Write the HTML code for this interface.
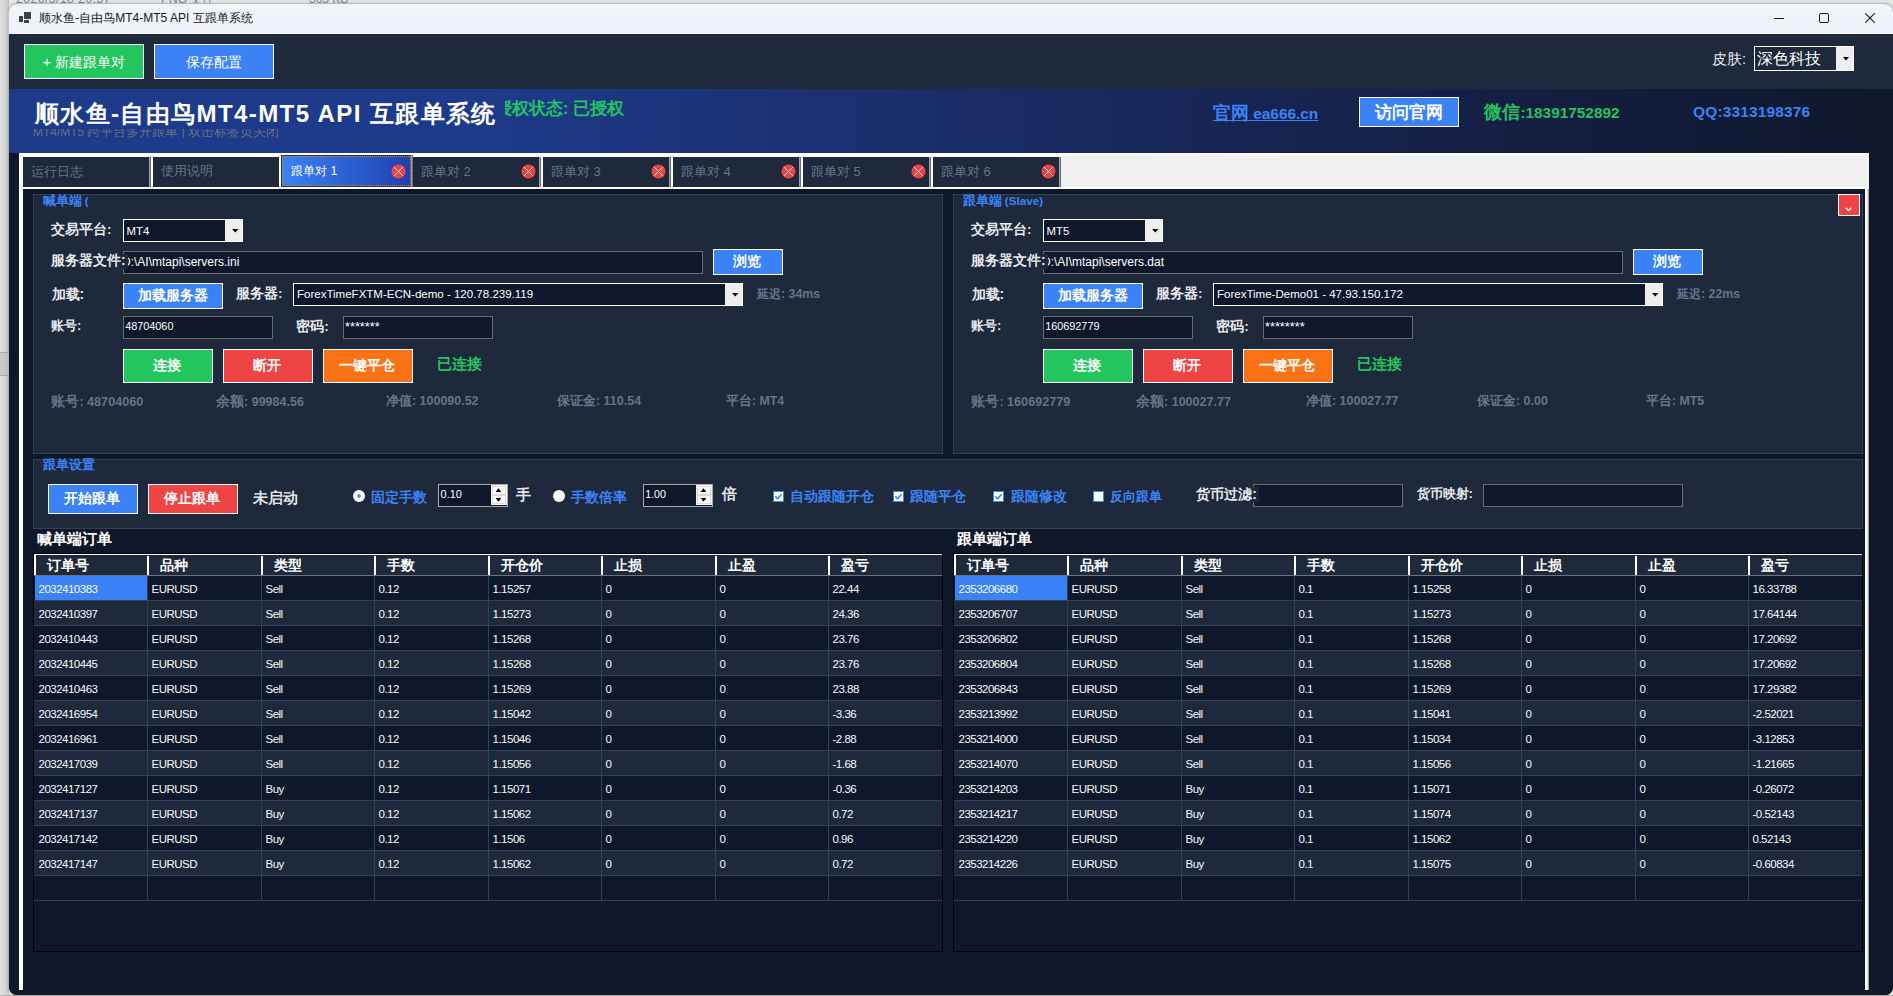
<!DOCTYPE html><html><head><meta charset="utf-8"><style>
html,body{margin:0;padding:0;}
body{width:1893px;height:996px;position:relative;overflow:hidden;background:#efefef;font-family:"Liberation Sans", sans-serif;}
div{box-sizing:border-box;}

</style></head><body>
<div style="position:absolute;left:0px;top:0px;width:1893px;height:996px;background:#e8e8e8;"></div>
<div style="position:absolute;left:0px;top:0px;width:9px;height:996px;background:linear-gradient(90deg,#dfdfdf 0px,#d6d6d6 5px,#cbcbcb 8px,#b8b8b8 9px);"></div>
<div style="position:absolute;left:0px;top:995px;width:1893px;height:1px;background:#b4b4b4;"></div>
<div style="position:absolute;left:0px;top:352px;width:9px;height:24px;background:#c9c9c9;border-top:1px solid #a8a8a8;border-bottom:1px solid #a8a8a8;"></div>
<div id="top1" class="t" style="position:absolute;left:16.00px;top:-9.00px;white-space:nowrap;font-size:12.00px;line-height:16px;color:#7a869a;letter-spacing:0.55px;">2026/3/18 20:37</div>
<div id="top2" class="t" style="position:absolute;left:161.00px;top:-9.00px;white-space:nowrap;font-size:12.00px;line-height:16px;color:#7a869a;">PNG 文件</div>
<div id="top3" class="t" style="position:absolute;left:309.00px;top:-9.00px;white-space:nowrap;font-size:12.00px;line-height:16px;color:#7a869a;">365 KB</div>
<div style="position:absolute;left:9px;top:4px;width:1884px;height:991px;background:#0f172a;border-radius:8px;overflow:hidden;box-shadow:0 0 5px rgba(0,0,0,0.22);"></div>
<div style="position:absolute;left:9px;top:4px;width:1884px;height:30px;background:linear-gradient(180deg,#f0f4fb,#eef2f8);border-radius:8px 8px 0 0;box-shadow:0 -1px 0 #bababa, -1px 0 0 #c4c4c4;"></div>
<div style="position:absolute;left:9px;top:33px;width:1884px;height:1px;background:#f8fafd;"></div>
<div style="position:absolute;left:19px;top:16px;width:4px;height:6px;background:#404040;"></div>
<div style="position:absolute;left:24px;top:12px;width:7px;height:7px;background:#404040;"></div>
<div style="position:absolute;left:24px;top:20px;width:5px;height:3px;background:#404040;"></div>
<div id="wtitle" class="t" style="position:absolute;left:39.20px;top:10.00px;white-space:nowrap;font-size:12.03px;line-height:16px;color:#1a1a1a;">顺水鱼-自由鸟MT4-MT5 API 互跟单系统</div>
<div style="position:absolute;left:1774px;top:18px;width:10px;height:1px;background:#1a1a1a"></div>
<div style="position:absolute;left:1819px;top:13px;width:10px;height:10px;border:1px solid #1a1a1a;border-radius:2px;box-sizing:border-box"></div>
<svg style="position:absolute;left:1865px;top:13px" width="10" height="10"><path d="M0.3 0.3L9.7 9.7M9.7 0.3L0.3 9.7" stroke="#1a1a1a" stroke-width="1.1"/></svg>
<div style="position:absolute;left:9px;top:34px;width:1884px;height:55px;background:#1e293b;"></div>
<div style="position:absolute;left:24px;top:44px;width:120px;height:35px;background:#22c55e;border:1px solid #fff;"></div>
<div id="b_new" class="t" style="position:absolute;left:42.80px;top:53.20px;white-space:nowrap;font-size:14.08px;line-height:18px;color:#fff;">+ 新建跟单对</div>
<div style="position:absolute;left:154px;top:44px;width:120px;height:35px;background:#3b82f6;border:1px solid #fff;"></div>
<div id="b_save" class="t" style="position:absolute;left:185.60px;top:53.80px;white-space:nowrap;font-size:13.70px;line-height:18px;color:#fff;">保存配置</div>
<div id="skinl" class="t" style="position:absolute;left:1712.00px;top:50.00px;white-space:nowrap;font-size:14.58px;line-height:19px;color:#e5e7eb;">皮肤:</div>
<div style="position:absolute;left:1754px;top:46px;width:100px;height:25px;border:1px solid #fff;background:#eee;"></div>
<div style="position:absolute;left:1755px;top:47px;width:81px;height:23px;background:#1e293b;"></div>
<div id="skin" class="t" style="position:absolute;left:1757.00px;top:48.00px;white-space:nowrap;font-size:16.00px;line-height:21px;color:#fff;">深色科技</div>
<svg style="position:absolute;left:1842.5px;top:57px" width="7" height="4"><path d="M0 0H6L3 3.5Z" fill="#000"/></svg>
<div style="position:absolute;left:9px;top:89px;width:1884px;height:64px;background:linear-gradient(90deg,#1e3a8a 0%,#1e3a8a 25%,#172554 65%,#0f172a 100%);"></div>
<div style="position:absolute;left:0;top:129px;width:300px;height:9px;overflow:hidden;">
<div id="sub" class="t" style="position:absolute;left:33.00px;top:-6.00px;white-space:nowrap;font-size:13.00px;line-height:17px;color:#6b7280;"><span style="font-size:92.0%">MT4/MT5 </span>跨平台多开跟单<span style="font-size:92.0%"> | </span>双击标签页关闭</div>
</div>
<div id="btitle" class="t" style="position:absolute;left:35.00px;top:98.20px;white-space:nowrap;font-size:24.08px;line-height:31px;color:#fff;font-weight:bold;letter-spacing:1.36px;">顺水鱼-自由鸟MT4-MT5 API 互跟单系统</div>
<div style="position:absolute;left:505px;top:90px;width:130px;height:30px;overflow:hidden;">
<div id="auth" class="t" style="position:absolute;left:-10.20px;top:7.60px;white-space:nowrap;font-size:17.10px;line-height:22px;color:#22c55e;font-weight:bold;">授权状态: 已授权</div>
</div>
<div id="link" class="t" style="position:absolute;left:1213.00px;top:101.50px;white-space:nowrap;font-size:18.00px;line-height:23px;color:#3b82f6;font-weight:bold;text-decoration:underline;">官网<span style="font-size:85.5%"> ea666.cn</span></div>
<div style="position:absolute;left:1359px;top:97px;width:100px;height:30px;background:#3b82f6;border:1px solid #fff;"></div>
<div id="b_visit" class="t" style="position:absolute;left:1375.20px;top:102.20px;white-space:nowrap;font-size:16.70px;line-height:22px;color:#fff;font-weight:bold;">访问官网</div>
<div id="wechat" class="t" style="position:absolute;left:1484.40px;top:101.00px;white-space:nowrap;font-size:18.00px;line-height:23px;color:#22c55e;font-weight:bold;">微信<span style="font-size:85.5%">:18391752892</span></div>
<div id="qq" class="t" style="position:absolute;left:1693.10px;top:102.00px;white-space:nowrap;font-size:15.40px;line-height:20px;color:#3b82f6;font-weight:bold;letter-spacing:0.2px;">QQ:3313198376</div>
<div style="position:absolute;left:9px;top:153px;width:1884px;height:842px;background:#0f172a;border-radius:0 0 8px 8px;"></div>
<div style="position:absolute;left:19px;top:153px;width:1850px;height:36px;background:#f0f0f0;"></div>
<div style="position:absolute;left:19px;top:153px;width:1042px;height:36px;background:#fbfbfb;"></div>
<div style="position:absolute;left:19px;top:153px;width:1850px;height:2px;background:#fff;"></div>
<div style="position:absolute;left:19px;top:189px;width:4px;height:801px;background:#fff;"></div>
<div style="position:absolute;left:1865px;top:189px;width:4px;height:801px;background:linear-gradient(90deg,#fff 0,#fff 2px,#8a8a8a 4px);"></div>
<div style="position:absolute;left:23px;top:187px;width:1842px;height:2px;background:#fff;"></div>
<div style="position:absolute;left:23px;top:157px;width:126px;height:30px;background:#1e293b;"></div>
<div style="position:absolute;left:149px;top:157px;width:1px;height:30px;background:#a0a0a0;"></div>
<div style="position:absolute;left:150px;top:157px;width:1px;height:30px;background:#6e6e6e;"></div>
<div id="tab0" class="t" style="position:absolute;left:31.00px;top:163.00px;white-space:nowrap;font-size:13.00px;line-height:17px;color:#64748b;">运行日志</div>
<div style="position:absolute;left:153px;top:157px;width:126px;height:30px;background:#1e293b;"></div>
<div id="tab1" class="t" style="position:absolute;left:161.00px;top:162.40px;white-space:nowrap;font-size:13.39px;line-height:17px;color:#64748b;">使用说明</div>
<div style="position:absolute;left:281px;top:155px;width:131px;height:32px;background:linear-gradient(90deg,#3b82f6,#1e40af);border:1px solid #27324a;"></div>
<div style="position:absolute;left:282px;top:156px;width:129px;height:30px;border:1px dotted #d98a0b;"></div>
<div style="position:absolute;left:411px;top:155px;width:1px;height:32px;background:#a0a0a0;"></div>
<div style="position:absolute;left:412px;top:155px;width:1px;height:32px;background:#6e6e6e;"></div>
<div id="tab2" class="t" style="position:absolute;left:291.00px;top:162.50px;white-space:nowrap;font-size:12.35px;line-height:16px;color:#fff;">跟单对 1</div>
<svg style="position:absolute;left:391.1px;top:164px" width="15" height="15"><circle cx="7.5" cy="7.5" r="7" fill="#ef4444"/><path d="M3.3 3.3L11.7 11.7M11.7 3.3L3.3 11.7" stroke="#fff" stroke-width="0.9"/></svg>
<div style="position:absolute;left:413px;top:157px;width:126px;height:30px;background:#1e293b;"></div>
<div style="position:absolute;left:539px;top:157px;width:1px;height:30px;background:#a0a0a0;"></div>
<div style="position:absolute;left:540px;top:157px;width:1px;height:30px;background:#6e6e6e;"></div>
<div id="tab3" class="t" style="position:absolute;left:421.00px;top:163.00px;white-space:nowrap;font-size:13.00px;line-height:17px;color:#64748b;">跟单对 2</div>
<svg style="position:absolute;left:521.2px;top:164px" width="15" height="15"><circle cx="7.5" cy="7.5" r="7" fill="#ef4444"/><path d="M3.3 3.3L11.7 11.7M11.7 3.3L3.3 11.7" stroke="#fff" stroke-width="0.9"/></svg>
<div style="position:absolute;left:543px;top:157px;width:126px;height:30px;background:#1e293b;"></div>
<div style="position:absolute;left:669px;top:157px;width:1px;height:30px;background:#a0a0a0;"></div>
<div style="position:absolute;left:670px;top:157px;width:1px;height:30px;background:#6e6e6e;"></div>
<div id="tab4" class="t" style="position:absolute;left:551.00px;top:163.00px;white-space:nowrap;font-size:13.00px;line-height:17px;color:#64748b;">跟单对 3</div>
<svg style="position:absolute;left:651.2px;top:164px" width="15" height="15"><circle cx="7.5" cy="7.5" r="7" fill="#ef4444"/><path d="M3.3 3.3L11.7 11.7M11.7 3.3L3.3 11.7" stroke="#fff" stroke-width="0.9"/></svg>
<div style="position:absolute;left:673px;top:157px;width:126px;height:30px;background:#1e293b;"></div>
<div style="position:absolute;left:799px;top:157px;width:1px;height:30px;background:#a0a0a0;"></div>
<div style="position:absolute;left:800px;top:157px;width:1px;height:30px;background:#6e6e6e;"></div>
<div id="tab5" class="t" style="position:absolute;left:681.00px;top:163.00px;white-space:nowrap;font-size:13.00px;line-height:17px;color:#64748b;">跟单对 4</div>
<svg style="position:absolute;left:781.2px;top:164px" width="15" height="15"><circle cx="7.5" cy="7.5" r="7" fill="#ef4444"/><path d="M3.3 3.3L11.7 11.7M11.7 3.3L3.3 11.7" stroke="#fff" stroke-width="0.9"/></svg>
<div style="position:absolute;left:803px;top:157px;width:126px;height:30px;background:#1e293b;"></div>
<div style="position:absolute;left:929px;top:157px;width:1px;height:30px;background:#a0a0a0;"></div>
<div style="position:absolute;left:930px;top:157px;width:1px;height:30px;background:#6e6e6e;"></div>
<div id="tab6" class="t" style="position:absolute;left:811.00px;top:163.00px;white-space:nowrap;font-size:13.00px;line-height:17px;color:#64748b;">跟单对 5</div>
<svg style="position:absolute;left:911.2px;top:164px" width="15" height="15"><circle cx="7.5" cy="7.5" r="7" fill="#ef4444"/><path d="M3.3 3.3L11.7 11.7M11.7 3.3L3.3 11.7" stroke="#fff" stroke-width="0.9"/></svg>
<div style="position:absolute;left:933px;top:157px;width:126px;height:30px;background:#1e293b;"></div>
<div style="position:absolute;left:1059px;top:157px;width:1px;height:30px;background:#a0a0a0;"></div>
<div style="position:absolute;left:1060px;top:157px;width:1px;height:30px;background:#6e6e6e;"></div>
<div id="tab7" class="t" style="position:absolute;left:941.00px;top:163.00px;white-space:nowrap;font-size:13.00px;line-height:17px;color:#64748b;">跟单对 6</div>
<svg style="position:absolute;left:1041.2px;top:164px" width="15" height="15"><circle cx="7.5" cy="7.5" r="7" fill="#ef4444"/><path d="M3.3 3.3L11.7 11.7M11.7 3.3L3.3 11.7" stroke="#fff" stroke-width="0.9"/></svg>
<div style="position:absolute;left:33px;top:194px;width:910px;height:260px;background:#1e293b;border:1px solid #334155;"></div>
<div id="mgt" class="t" style="position:absolute;left:42.60px;top:192.60px;white-space:nowrap;font-size:12.69px;line-height:16px;color:#3b82f6;font-weight:bold;">喊单端<span style="font-size:92.0%"> (</span></div>
<div id="ml1" class="t" style="position:absolute;left:51.00px;top:221.00px;white-space:nowrap;font-size:13.63px;line-height:18px;color:#e5e7eb;font-weight:bold;">交易平台:</div>
<div style="position:absolute;left:123px;top:219px;width:120px;height:23px;border:1px solid #fff;background:#eee;"></div>
<div style="position:absolute;left:124px;top:220px;width:101px;height:21px;background:#0f172a;"></div>
<svg style="position:absolute;left:231.5px;top:229px" width="7" height="4"><path d="M0 0H6.5L3.25 3.5Z" fill="#000"/></svg>
<div id="mplat" class="t" style="position:absolute;left:126.60px;top:223.60px;white-space:nowrap;font-size:11.38px;line-height:15px;color:#fff;">MT4</div>
<div style="position:absolute;left:123px;top:251px;width:580px;height:23px;border:1px solid #6b6b6b;background:#0f172a;"></div>
<div style="position:absolute;left:124px;top:252px;width:570px;height:20px;overflow:hidden">
<div id="mfile" class="t" style="position:absolute;left:-2.00px;top:2.00px;white-space:nowrap;font-size:12.00px;line-height:16px;color:#fff;">D:\AI\mtapi\servers.ini</div>
</div>
<div style="position:absolute;left:51px;top:254px;width:77px;height:15px;background:#1e293b;"></div>
<div id="ml2" class="t" style="position:absolute;left:51.00px;top:252.40px;white-space:nowrap;font-size:13.80px;line-height:18px;color:#e5e7eb;font-weight:bold;">服务器文件:</div>
<div style="position:absolute;left:713px;top:249px;width:70px;height:26px;background:#3b82f6;border:1px solid #fff;"></div>
<div id="mbrowse" class="t" style="position:absolute;left:733.20px;top:252.20px;white-space:nowrap;font-size:13.94px;line-height:18px;color:#fff;font-weight:bold;">浏览</div>
<div id="ml3" class="t" style="position:absolute;left:51.60px;top:284.50px;white-space:nowrap;font-size:13.83px;line-height:18px;color:#e5e7eb;font-weight:bold;">加载:</div>
<div style="position:absolute;left:123px;top:283px;width:100px;height:26px;background:#3b82f6;border:1px solid #fff;"></div>
<div id="mload" class="t" style="position:absolute;left:138.20px;top:286.00px;white-space:nowrap;font-size:14.35px;line-height:19px;color:#fff;font-weight:bold;">加载服务器</div>
<div id="ml4" class="t" style="position:absolute;left:236.00px;top:285.00px;white-space:nowrap;font-size:13.52px;line-height:18px;color:#e5e7eb;font-weight:bold;">服务器:</div>
<div style="position:absolute;left:293px;top:283px;width:450px;height:23px;border:1px solid #fff;background:#eee;"></div>
<div style="position:absolute;left:294px;top:284px;width:431px;height:21px;background:#0f172a;"></div>
<svg style="position:absolute;left:731.5px;top:293px" width="7" height="4"><path d="M0 0H6.5L3.25 3.5Z" fill="#000"/></svg>
<div id="mserver" class="t" style="position:absolute;left:297.00px;top:286.80px;white-space:nowrap;font-size:11.53px;line-height:15px;color:#fff;">ForexTimeFXTM-ECN-demo - 120.78.239.119</div>
<div id="mdelay" class="t" style="position:absolute;left:757.00px;top:286.30px;white-space:nowrap;font-size:12.36px;line-height:16px;color:#64748b;font-weight:bold;">延迟: 34ms</div>
<div id="ml5" class="t" style="position:absolute;left:51.00px;top:316.90px;white-space:nowrap;font-size:13.09px;line-height:17px;color:#e5e7eb;font-weight:bold;">账号:</div>
<div style="position:absolute;left:123px;top:316px;width:150px;height:23px;border:1px solid #6b6b6b;background:#0f172a;"></div>
<div id="macct" class="t" style="position:absolute;left:125.20px;top:318.80px;white-space:nowrap;font-size:10.85px;line-height:14px;color:#fff;">48704060</div>
<div id="ml6" class="t" style="position:absolute;left:296.20px;top:318.30px;white-space:nowrap;font-size:13.56px;line-height:18px;color:#e5e7eb;font-weight:bold;">密码:</div>
<div style="position:absolute;left:343px;top:316px;width:150px;height:23px;border:1px solid #6b6b6b;background:#0f172a;"></div>
<div id="mpwd" class="t" style="position:absolute;left:345.00px;top:317.50px;white-space:nowrap;font-size:12.73px;line-height:17px;color:#fff;">*******</div>
<div style="position:absolute;left:123px;top:349px;width:90px;height:34px;background:#22c55e;border:1px solid #fff;"></div>
<div id="mc1" class="t" style="position:absolute;left:153.30px;top:356.80px;white-space:nowrap;font-size:13.50px;line-height:18px;color:#fff;font-weight:bold;">连接</div>
<div style="position:absolute;left:223px;top:349px;width:90px;height:34px;background:#ef4444;border:1px solid #fff;"></div>
<div id="mc2" class="t" style="position:absolute;left:253.20px;top:357.30px;white-space:nowrap;font-size:13.50px;line-height:18px;color:#fff;font-weight:bold;">断开</div>
<div style="position:absolute;left:323px;top:349px;width:90px;height:34px;background:#f97316;border:1px solid #fff;"></div>
<div id="mc3" class="t" style="position:absolute;left:339.10px;top:357.30px;white-space:nowrap;font-size:13.50px;line-height:18px;color:#fff;font-weight:bold;">一键平仓</div>
<div id="mconn" class="t" style="position:absolute;left:437.00px;top:354.00px;white-space:nowrap;font-size:15.31px;line-height:20px;color:#22c55e;font-weight:bold;">已连接</div>
<div id="minfo0" class="t" style="position:absolute;left:51.40px;top:392.50px;white-space:nowrap;font-size:13.56px;line-height:18px;color:#64748b;font-weight:bold;">账号<span style="font-size:93.0%">: 48704060</span></div>
<div id="minfo1" class="t" style="position:absolute;left:216.00px;top:392.70px;white-space:nowrap;font-size:13.51px;line-height:18px;color:#64748b;font-weight:bold;">余额<span style="font-size:93.0%">: 99984.56</span></div>
<div id="minfo2" class="t" style="position:absolute;left:386.00px;top:392.20px;white-space:nowrap;font-size:13.42px;line-height:17px;color:#64748b;font-weight:bold;">净值<span style="font-size:93.0%">: 100090.52</span></div>
<div id="minfo3" class="t" style="position:absolute;left:557.00px;top:392.20px;white-space:nowrap;font-size:13.41px;line-height:17px;color:#64748b;font-weight:bold;">保证金<span style="font-size:93.0%">: 110.54</span></div>
<div id="minfo4" class="t" style="position:absolute;left:726.00px;top:392.20px;white-space:nowrap;font-size:13.28px;line-height:17px;color:#64748b;font-weight:bold;">平台<span style="font-size:93.0%">: MT4</span></div>
<div style="position:absolute;left:953px;top:194px;width:910px;height:260px;background:#1e293b;border:1px solid #334155;"></div>
<div id="sgt" class="t" style="position:absolute;left:962.60px;top:192.60px;white-space:nowrap;font-size:12.69px;line-height:16px;color:#3b82f6;font-weight:bold;">跟单端<span style="font-size:92.0%"> (Slave)</span></div>
<div id="sl1" class="t" style="position:absolute;left:971.00px;top:221.00px;white-space:nowrap;font-size:13.63px;line-height:18px;color:#e5e7eb;font-weight:bold;">交易平台:</div>
<div style="position:absolute;left:1043px;top:219px;width:120px;height:23px;border:1px solid #fff;background:#eee;"></div>
<div style="position:absolute;left:1044px;top:220px;width:101px;height:21px;background:#0f172a;"></div>
<svg style="position:absolute;left:1151.5px;top:229px" width="7" height="4"><path d="M0 0H6.5L3.25 3.5Z" fill="#000"/></svg>
<div id="splat" class="t" style="position:absolute;left:1046.60px;top:223.60px;white-space:nowrap;font-size:11.38px;line-height:15px;color:#fff;">MT5</div>
<div style="position:absolute;left:1043px;top:251px;width:580px;height:23px;border:1px solid #6b6b6b;background:#0f172a;"></div>
<div style="position:absolute;left:1044px;top:252px;width:570px;height:20px;overflow:hidden">
<div id="sfile" class="t" style="position:absolute;left:-2.00px;top:2.00px;white-space:nowrap;font-size:12.00px;line-height:16px;color:#fff;">D:\AI\mtapi\servers.dat</div>
</div>
<div style="position:absolute;left:971px;top:254px;width:77px;height:15px;background:#1e293b;"></div>
<div id="sl2" class="t" style="position:absolute;left:971.00px;top:252.40px;white-space:nowrap;font-size:13.80px;line-height:18px;color:#e5e7eb;font-weight:bold;">服务器文件:</div>
<div style="position:absolute;left:1633px;top:249px;width:70px;height:26px;background:#3b82f6;border:1px solid #fff;"></div>
<div id="sbrowse" class="t" style="position:absolute;left:1653.20px;top:252.20px;white-space:nowrap;font-size:13.94px;line-height:18px;color:#fff;font-weight:bold;">浏览</div>
<div id="sl3" class="t" style="position:absolute;left:971.60px;top:284.50px;white-space:nowrap;font-size:13.83px;line-height:18px;color:#e5e7eb;font-weight:bold;">加载:</div>
<div style="position:absolute;left:1043px;top:283px;width:100px;height:26px;background:#3b82f6;border:1px solid #fff;"></div>
<div id="sload" class="t" style="position:absolute;left:1058.20px;top:286.00px;white-space:nowrap;font-size:14.35px;line-height:19px;color:#fff;font-weight:bold;">加载服务器</div>
<div id="sl4" class="t" style="position:absolute;left:1156.00px;top:285.00px;white-space:nowrap;font-size:13.52px;line-height:18px;color:#e5e7eb;font-weight:bold;">服务器:</div>
<div style="position:absolute;left:1213px;top:283px;width:450px;height:23px;border:1px solid #fff;background:#eee;"></div>
<div style="position:absolute;left:1214px;top:284px;width:431px;height:21px;background:#0f172a;"></div>
<svg style="position:absolute;left:1651.5px;top:293px" width="7" height="4"><path d="M0 0H6.5L3.25 3.5Z" fill="#000"/></svg>
<div id="sserver" class="t" style="position:absolute;left:1217.00px;top:286.80px;white-space:nowrap;font-size:11.53px;line-height:15px;color:#fff;">ForexTime-Demo01 - 47.93.150.172</div>
<div id="sdelay" class="t" style="position:absolute;left:1677.00px;top:286.30px;white-space:nowrap;font-size:12.36px;line-height:16px;color:#64748b;font-weight:bold;">延迟: 22ms</div>
<div id="sl5" class="t" style="position:absolute;left:971.00px;top:316.90px;white-space:nowrap;font-size:13.09px;line-height:17px;color:#e5e7eb;font-weight:bold;">账号:</div>
<div style="position:absolute;left:1043px;top:316px;width:150px;height:23px;border:1px solid #6b6b6b;background:#0f172a;"></div>
<div id="sacct" class="t" style="position:absolute;left:1045.20px;top:318.80px;white-space:nowrap;font-size:10.85px;line-height:14px;color:#fff;">160692779</div>
<div id="sl6" class="t" style="position:absolute;left:1216.20px;top:318.30px;white-space:nowrap;font-size:13.56px;line-height:18px;color:#e5e7eb;font-weight:bold;">密码:</div>
<div style="position:absolute;left:1263px;top:316px;width:150px;height:23px;border:1px solid #6b6b6b;background:#0f172a;"></div>
<div id="spwd" class="t" style="position:absolute;left:1265.00px;top:317.50px;white-space:nowrap;font-size:12.73px;line-height:17px;color:#fff;">********</div>
<div style="position:absolute;left:1043px;top:349px;width:90px;height:34px;background:#22c55e;border:1px solid #fff;"></div>
<div id="sc1" class="t" style="position:absolute;left:1073.30px;top:356.80px;white-space:nowrap;font-size:13.50px;line-height:18px;color:#fff;font-weight:bold;">连接</div>
<div style="position:absolute;left:1143px;top:349px;width:90px;height:34px;background:#ef4444;border:1px solid #fff;"></div>
<div id="sc2" class="t" style="position:absolute;left:1173.20px;top:357.30px;white-space:nowrap;font-size:13.50px;line-height:18px;color:#fff;font-weight:bold;">断开</div>
<div style="position:absolute;left:1243px;top:349px;width:90px;height:34px;background:#f97316;border:1px solid #fff;"></div>
<div id="sc3" class="t" style="position:absolute;left:1259.10px;top:357.30px;white-space:nowrap;font-size:13.50px;line-height:18px;color:#fff;font-weight:bold;">一键平仓</div>
<div id="sconn" class="t" style="position:absolute;left:1357.00px;top:354.00px;white-space:nowrap;font-size:15.31px;line-height:20px;color:#22c55e;font-weight:bold;">已连接</div>
<div id="sinfo0" class="t" style="position:absolute;left:971.40px;top:392.50px;white-space:nowrap;font-size:13.56px;line-height:18px;color:#64748b;font-weight:bold;">账号<span style="font-size:93.0%">: 160692779</span></div>
<div id="sinfo1" class="t" style="position:absolute;left:1136.00px;top:392.70px;white-space:nowrap;font-size:13.51px;line-height:18px;color:#64748b;font-weight:bold;">余额<span style="font-size:93.0%">: 100027.77</span></div>
<div id="sinfo2" class="t" style="position:absolute;left:1306.00px;top:392.20px;white-space:nowrap;font-size:13.42px;line-height:17px;color:#64748b;font-weight:bold;">净值<span style="font-size:93.0%">: 100027.77</span></div>
<div id="sinfo3" class="t" style="position:absolute;left:1477.00px;top:392.20px;white-space:nowrap;font-size:13.41px;line-height:17px;color:#64748b;font-weight:bold;">保证金<span style="font-size:93.0%">: 0.00</span></div>
<div id="sinfo4" class="t" style="position:absolute;left:1646.00px;top:392.20px;white-space:nowrap;font-size:13.28px;line-height:17px;color:#64748b;font-weight:bold;">平台<span style="font-size:93.0%">: MT5</span></div>
<div style="position:absolute;left:1838px;top:194px;width:22px;height:22px;background:#ef4444;border:1px solid #fff;"></div>
<svg style="position:absolute;left:1845px;top:207px" width="7" height="5"><path d="M0.7 0.7L3.5 3.6L6.3 0.7" stroke="#fff" stroke-width="1.4" fill="none"/></svg>
<div style="position:absolute;left:33px;top:459px;width:1830px;height:70px;background:#1e293b;border:1px solid #334155;"></div>
<div id="setg" class="t" style="position:absolute;left:42.60px;top:457.00px;white-space:nowrap;font-size:12.54px;line-height:16px;color:#3b82f6;font-weight:bold;">跟单设置</div>
<div style="position:absolute;left:48px;top:484px;width:90px;height:30px;background:#3b82f6;border:1px solid #fff;"></div>
<div id="start" class="t" style="position:absolute;left:64.40px;top:490.00px;white-space:nowrap;font-size:13.50px;line-height:18px;color:#fff;font-weight:bold;">开始跟单</div>
<div style="position:absolute;left:148px;top:484px;width:90px;height:30px;background:#ef4444;border:1px solid #fff;"></div>
<div id="stop" class="t" style="position:absolute;left:164.30px;top:490.00px;white-space:nowrap;font-size:13.50px;line-height:18px;color:#fff;font-weight:bold;">停止跟单</div>
<div id="notst" class="t" style="position:absolute;left:252.50px;top:488.65px;white-space:nowrap;font-size:14.50px;line-height:19px;color:#e5e7eb;font-weight:bold;">未启动</div>
<svg style="position:absolute;left:353px;top:490px" width="12" height="12"><circle cx="6" cy="6" r="6" fill="#fff"/><circle cx="6" cy="6" r="1.8" fill="#3b82f6"/></svg>
<div id="r1" class="t" style="position:absolute;left:371.00px;top:488.60px;white-space:nowrap;font-size:13.78px;line-height:18px;color:#3b82f6;font-weight:bold;">固定手数</div>
<div style="position:absolute;left:438px;top:484px;width:70px;height:23px;border:1px solid #a8a8a8;background:#0f172a;"></div>
<div style="position:absolute;left:491px;top:485px;width:16px;height:20px;background:#f8f8f8;"></div>
<div style="position:absolute;left:492px;top:486px;width:14px;height:9px;border:1px solid #d9d9d9;background:#fbfbfb;"></div>
<div style="position:absolute;left:492px;top:495px;width:14px;height:9px;border:1px solid #d9d9d9;background:#fbfbfb;"></div>
<svg style="position:absolute;left:438px;top:484px" width="70" height="23"><path d="M57.6 8H63.4L60.5 4.2Z M57.6 14H63.4L60.5 17.8Z" fill="#000"/></svg>
<div id="sp1" class="t" style="position:absolute;left:440.60px;top:487.00px;white-space:nowrap;font-size:10.86px;line-height:14px;color:#fff;">0.10</div>
<div id="hand" class="t" style="position:absolute;left:516.00px;top:484.50px;white-space:nowrap;font-size:15.13px;line-height:20px;color:#e5e7eb;font-weight:bold;">手</div>
<svg style="position:absolute;left:553px;top:490px" width="12" height="12"><circle cx="6" cy="6" r="6" fill="#fff"/></svg>
<div id="r2" class="t" style="position:absolute;left:571.00px;top:487.60px;white-space:nowrap;font-size:14.38px;line-height:19px;color:#3b82f6;font-weight:bold;">手数倍率</div>
<div style="position:absolute;left:643px;top:484px;width:70px;height:23px;border:1px solid #a8a8a8;background:#0f172a;"></div>
<div style="position:absolute;left:696px;top:485px;width:16px;height:20px;background:#f8f8f8;"></div>
<div style="position:absolute;left:697px;top:486px;width:14px;height:9px;border:1px solid #d9d9d9;background:#fbfbfb;"></div>
<div style="position:absolute;left:697px;top:495px;width:14px;height:9px;border:1px solid #d9d9d9;background:#fbfbfb;"></div>
<svg style="position:absolute;left:643px;top:484px" width="70" height="23"><path d="M57.6 8H63.4L60.5 4.2Z M57.6 14H63.4L60.5 17.8Z" fill="#000"/></svg>
<div id="sp2" class="t" style="position:absolute;left:645.20px;top:487.00px;white-space:nowrap;font-size:10.71px;line-height:14px;color:#fff;">1.00</div>
<div id="bei" class="t" style="position:absolute;left:722.20px;top:485.40px;white-space:nowrap;font-size:14.58px;line-height:19px;color:#e5e7eb;font-weight:bold;">倍</div>
<svg style="position:absolute;left:773px;top:491px" width="11" height="11"><rect x="0.5" y="0.5" width="10" height="10" fill="#fff" stroke="#3b82f6"/><path d="M2.3 5.2L4.6 7.8L8.6 3.2" stroke="#3b82f6" stroke-width="1.6" fill="none"/></svg>
<div id="k1" class="t" style="position:absolute;left:790.00px;top:487.20px;white-space:nowrap;font-size:14.00px;line-height:18px;color:#3b82f6;font-weight:bold;">自动跟随开仓</div>
<svg style="position:absolute;left:893px;top:491px" width="11" height="11"><rect x="0.5" y="0.5" width="10" height="10" fill="#fff" stroke="#3b82f6"/><path d="M2.3 5.2L4.6 7.8L8.6 3.2" stroke="#3b82f6" stroke-width="1.6" fill="none"/></svg>
<div id="k2" class="t" style="position:absolute;left:910.00px;top:487.20px;white-space:nowrap;font-size:14.00px;line-height:18px;color:#3b82f6;font-weight:bold;">跟随平仓</div>
<svg style="position:absolute;left:993px;top:491px" width="11" height="11"><rect x="0.5" y="0.5" width="10" height="10" fill="#fff" stroke="#3b82f6"/><path d="M2.3 5.2L4.6 7.8L8.6 3.2" stroke="#3b82f6" stroke-width="1.6" fill="none"/></svg>
<div id="k3" class="t" style="position:absolute;left:1010.60px;top:488.20px;white-space:nowrap;font-size:13.70px;line-height:18px;color:#3b82f6;font-weight:bold;">跟随修改</div>
<svg style="position:absolute;left:1093px;top:491px" width="11" height="11"><rect x="0.5" y="0.5" width="10" height="10" fill="#fff" stroke="#3b82f6"/></svg>
<div id="k4" class="t" style="position:absolute;left:1110.00px;top:487.70px;white-space:nowrap;font-size:13.41px;line-height:17px;color:#3b82f6;font-weight:bold;">反向跟单</div>
<div style="position:absolute;left:1253px;top:484px;width:150px;height:23px;border:1px solid #6b6b6b;background:#0f172a;"></div>
<div style="position:absolute;left:1196px;top:487px;width:63px;height:15px;background:#1e293b;"></div>
<div id="cf" class="t" style="position:absolute;left:1196.20px;top:485.60px;white-space:nowrap;font-size:13.75px;line-height:18px;color:#e5e7eb;font-weight:bold;">货币过滤:</div>
<div id="cm" class="t" style="position:absolute;left:1416.60px;top:484.50px;white-space:nowrap;font-size:13.48px;line-height:18px;color:#e5e7eb;font-weight:bold;">货币映射:</div>
<div style="position:absolute;left:1483px;top:484px;width:200px;height:23px;border:1px solid #6b6b6b;background:#0f172a;"></div>
<div id="molab" class="t" style="position:absolute;left:36.80px;top:529.00px;white-space:nowrap;font-size:15.18px;line-height:20px;color:#fff;font-weight:bold;">喊单端订单</div>
<div style="position:absolute;left:33px;top:553px;width:910px;height:399px;background:#0f172a;border:1px solid #000;"></div>
<div style="position:absolute;left:34px;top:554px;width:908px;height:22px;background:#1e293b;border-top:1px solid #fff;border-left:2px solid #fff;border-bottom:1px solid #6b7280;"></div>
<div id="mh0" class="t" style="position:absolute;left:47.00px;top:556.50px;white-space:nowrap;font-size:13.68px;line-height:18px;color:#fff;font-weight:bold;">订单号</div>
<div style="position:absolute;left:147px;top:556px;width:2px;height:19px;background:#fff;"></div>
<div id="mh1" class="t" style="position:absolute;left:160.00px;top:556.50px;white-space:nowrap;font-size:13.68px;line-height:18px;color:#fff;font-weight:bold;">品种</div>
<div style="position:absolute;left:261px;top:556px;width:2px;height:19px;background:#fff;"></div>
<div id="mh2" class="t" style="position:absolute;left:274.00px;top:556.50px;white-space:nowrap;font-size:13.68px;line-height:18px;color:#fff;font-weight:bold;">类型</div>
<div style="position:absolute;left:374px;top:556px;width:2px;height:19px;background:#fff;"></div>
<div id="mh3" class="t" style="position:absolute;left:387.00px;top:556.50px;white-space:nowrap;font-size:13.68px;line-height:18px;color:#fff;font-weight:bold;">手数</div>
<div style="position:absolute;left:488px;top:556px;width:2px;height:19px;background:#fff;"></div>
<div id="mh4" class="t" style="position:absolute;left:501.00px;top:556.50px;white-space:nowrap;font-size:13.68px;line-height:18px;color:#fff;font-weight:bold;">开仓价</div>
<div style="position:absolute;left:601px;top:556px;width:2px;height:19px;background:#fff;"></div>
<div id="mh5" class="t" style="position:absolute;left:614.00px;top:556.50px;white-space:nowrap;font-size:13.68px;line-height:18px;color:#fff;font-weight:bold;">止损</div>
<div style="position:absolute;left:715px;top:556px;width:2px;height:19px;background:#fff;"></div>
<div id="mh6" class="t" style="position:absolute;left:728.00px;top:556.50px;white-space:nowrap;font-size:13.68px;line-height:18px;color:#fff;font-weight:bold;">止盈</div>
<div style="position:absolute;left:828px;top:556px;width:2px;height:19px;background:#fff;"></div>
<div id="mh7" class="t" style="position:absolute;left:841.00px;top:556.50px;white-space:nowrap;font-size:13.68px;line-height:18px;color:#fff;font-weight:bold;">盈亏</div>
<div style="position:absolute;left:34px;top:575px;width:908px;height:26px;background:#0f172a;border-top:1px solid #6b7280;border-bottom:1px solid #334155;"></div>
<div style="position:absolute;left:35px;top:576px;width:112px;height:24px;background:#3b82f6;"></div>
<div id="cell" class="t" style="position:absolute;left:38.50px;top:581.50px;white-space:nowrap;font-size:11.50px;line-height:15px;color:#f8fafc;letter-spacing:-0.5px;">2032410383</div>
<div style="position:absolute;left:147px;top:576px;width:1px;height:25px;background:#334155;"></div>
<div id="mc0_1" class="t" style="position:absolute;left:151.50px;top:581.50px;white-space:nowrap;font-size:11.50px;line-height:15px;color:#f8fafc;letter-spacing:-0.5px;">EURUSD</div>
<div style="position:absolute;left:261px;top:576px;width:1px;height:25px;background:#334155;"></div>
<div id="mc0_2" class="t" style="position:absolute;left:265.50px;top:581.50px;white-space:nowrap;font-size:11.50px;line-height:15px;color:#f8fafc;letter-spacing:-0.5px;">Sell</div>
<div style="position:absolute;left:374px;top:576px;width:1px;height:25px;background:#334155;"></div>
<div id="mc0_3" class="t" style="position:absolute;left:378.50px;top:581.50px;white-space:nowrap;font-size:11.50px;line-height:15px;color:#f8fafc;letter-spacing:-0.5px;">0.12</div>
<div style="position:absolute;left:488px;top:576px;width:1px;height:25px;background:#334155;"></div>
<div id="mc0_4" class="t" style="position:absolute;left:492.50px;top:581.50px;white-space:nowrap;font-size:11.50px;line-height:15px;color:#f8fafc;letter-spacing:-0.5px;">1.15257</div>
<div style="position:absolute;left:601px;top:576px;width:1px;height:25px;background:#334155;"></div>
<div id="mc0_5" class="t" style="position:absolute;left:605.50px;top:581.50px;white-space:nowrap;font-size:11.50px;line-height:15px;color:#f8fafc;letter-spacing:-0.5px;">0</div>
<div style="position:absolute;left:715px;top:576px;width:1px;height:25px;background:#334155;"></div>
<div id="mc0_6" class="t" style="position:absolute;left:719.50px;top:581.50px;white-space:nowrap;font-size:11.50px;line-height:15px;color:#f8fafc;letter-spacing:-0.5px;">0</div>
<div style="position:absolute;left:828px;top:576px;width:1px;height:25px;background:#334155;"></div>
<div id="mc0_7" class="t" style="position:absolute;left:832.50px;top:581.50px;white-space:nowrap;font-size:11.50px;line-height:15px;color:#f8fafc;letter-spacing:-0.5px;">22.44</div>
<div style="position:absolute;left:34px;top:600px;width:908px;height:26px;background:#1e293b;border-top:1px solid #334155;border-bottom:1px solid #334155;"></div>
<div id="mc1_0" class="t" style="position:absolute;left:38.50px;top:606.50px;white-space:nowrap;font-size:11.50px;line-height:15px;color:#f8fafc;letter-spacing:-0.5px;">2032410397</div>
<div style="position:absolute;left:147px;top:601px;width:1px;height:25px;background:#334155;"></div>
<div id="mc1_1" class="t" style="position:absolute;left:151.50px;top:606.50px;white-space:nowrap;font-size:11.50px;line-height:15px;color:#f8fafc;letter-spacing:-0.5px;">EURUSD</div>
<div style="position:absolute;left:261px;top:601px;width:1px;height:25px;background:#334155;"></div>
<div id="mc1_2" class="t" style="position:absolute;left:265.50px;top:606.50px;white-space:nowrap;font-size:11.50px;line-height:15px;color:#f8fafc;letter-spacing:-0.5px;">Sell</div>
<div style="position:absolute;left:374px;top:601px;width:1px;height:25px;background:#334155;"></div>
<div id="mc1_3" class="t" style="position:absolute;left:378.50px;top:606.50px;white-space:nowrap;font-size:11.50px;line-height:15px;color:#f8fafc;letter-spacing:-0.5px;">0.12</div>
<div style="position:absolute;left:488px;top:601px;width:1px;height:25px;background:#334155;"></div>
<div id="mc1_4" class="t" style="position:absolute;left:492.50px;top:606.50px;white-space:nowrap;font-size:11.50px;line-height:15px;color:#f8fafc;letter-spacing:-0.5px;">1.15273</div>
<div style="position:absolute;left:601px;top:601px;width:1px;height:25px;background:#334155;"></div>
<div id="mc1_5" class="t" style="position:absolute;left:605.50px;top:606.50px;white-space:nowrap;font-size:11.50px;line-height:15px;color:#f8fafc;letter-spacing:-0.5px;">0</div>
<div style="position:absolute;left:715px;top:601px;width:1px;height:25px;background:#334155;"></div>
<div id="mc1_6" class="t" style="position:absolute;left:719.50px;top:606.50px;white-space:nowrap;font-size:11.50px;line-height:15px;color:#f8fafc;letter-spacing:-0.5px;">0</div>
<div style="position:absolute;left:828px;top:601px;width:1px;height:25px;background:#334155;"></div>
<div id="mc1_7" class="t" style="position:absolute;left:832.50px;top:606.50px;white-space:nowrap;font-size:11.50px;line-height:15px;color:#f8fafc;letter-spacing:-0.5px;">24.36</div>
<div style="position:absolute;left:34px;top:625px;width:908px;height:26px;background:#0f172a;border-top:1px solid #334155;border-bottom:1px solid #334155;"></div>
<div id="mc2_0" class="t" style="position:absolute;left:38.50px;top:631.50px;white-space:nowrap;font-size:11.50px;line-height:15px;color:#f8fafc;letter-spacing:-0.5px;">2032410443</div>
<div style="position:absolute;left:147px;top:626px;width:1px;height:25px;background:#334155;"></div>
<div id="mc2_1" class="t" style="position:absolute;left:151.50px;top:631.50px;white-space:nowrap;font-size:11.50px;line-height:15px;color:#f8fafc;letter-spacing:-0.5px;">EURUSD</div>
<div style="position:absolute;left:261px;top:626px;width:1px;height:25px;background:#334155;"></div>
<div id="mc2_2" class="t" style="position:absolute;left:265.50px;top:631.50px;white-space:nowrap;font-size:11.50px;line-height:15px;color:#f8fafc;letter-spacing:-0.5px;">Sell</div>
<div style="position:absolute;left:374px;top:626px;width:1px;height:25px;background:#334155;"></div>
<div id="mc2_3" class="t" style="position:absolute;left:378.50px;top:631.50px;white-space:nowrap;font-size:11.50px;line-height:15px;color:#f8fafc;letter-spacing:-0.5px;">0.12</div>
<div style="position:absolute;left:488px;top:626px;width:1px;height:25px;background:#334155;"></div>
<div id="mc2_4" class="t" style="position:absolute;left:492.50px;top:631.50px;white-space:nowrap;font-size:11.50px;line-height:15px;color:#f8fafc;letter-spacing:-0.5px;">1.15268</div>
<div style="position:absolute;left:601px;top:626px;width:1px;height:25px;background:#334155;"></div>
<div id="mc2_5" class="t" style="position:absolute;left:605.50px;top:631.50px;white-space:nowrap;font-size:11.50px;line-height:15px;color:#f8fafc;letter-spacing:-0.5px;">0</div>
<div style="position:absolute;left:715px;top:626px;width:1px;height:25px;background:#334155;"></div>
<div id="mc2_6" class="t" style="position:absolute;left:719.50px;top:631.50px;white-space:nowrap;font-size:11.50px;line-height:15px;color:#f8fafc;letter-spacing:-0.5px;">0</div>
<div style="position:absolute;left:828px;top:626px;width:1px;height:25px;background:#334155;"></div>
<div id="mc2_7" class="t" style="position:absolute;left:832.50px;top:631.50px;white-space:nowrap;font-size:11.50px;line-height:15px;color:#f8fafc;letter-spacing:-0.5px;">23.76</div>
<div style="position:absolute;left:34px;top:650px;width:908px;height:26px;background:#1e293b;border-top:1px solid #334155;border-bottom:1px solid #334155;"></div>
<div id="mc3_0" class="t" style="position:absolute;left:38.50px;top:656.50px;white-space:nowrap;font-size:11.50px;line-height:15px;color:#f8fafc;letter-spacing:-0.5px;">2032410445</div>
<div style="position:absolute;left:147px;top:651px;width:1px;height:25px;background:#334155;"></div>
<div id="mc3_1" class="t" style="position:absolute;left:151.50px;top:656.50px;white-space:nowrap;font-size:11.50px;line-height:15px;color:#f8fafc;letter-spacing:-0.5px;">EURUSD</div>
<div style="position:absolute;left:261px;top:651px;width:1px;height:25px;background:#334155;"></div>
<div id="mc3_2" class="t" style="position:absolute;left:265.50px;top:656.50px;white-space:nowrap;font-size:11.50px;line-height:15px;color:#f8fafc;letter-spacing:-0.5px;">Sell</div>
<div style="position:absolute;left:374px;top:651px;width:1px;height:25px;background:#334155;"></div>
<div id="mc3_3" class="t" style="position:absolute;left:378.50px;top:656.50px;white-space:nowrap;font-size:11.50px;line-height:15px;color:#f8fafc;letter-spacing:-0.5px;">0.12</div>
<div style="position:absolute;left:488px;top:651px;width:1px;height:25px;background:#334155;"></div>
<div id="mc3_4" class="t" style="position:absolute;left:492.50px;top:656.50px;white-space:nowrap;font-size:11.50px;line-height:15px;color:#f8fafc;letter-spacing:-0.5px;">1.15268</div>
<div style="position:absolute;left:601px;top:651px;width:1px;height:25px;background:#334155;"></div>
<div id="mc3_5" class="t" style="position:absolute;left:605.50px;top:656.50px;white-space:nowrap;font-size:11.50px;line-height:15px;color:#f8fafc;letter-spacing:-0.5px;">0</div>
<div style="position:absolute;left:715px;top:651px;width:1px;height:25px;background:#334155;"></div>
<div id="mc3_6" class="t" style="position:absolute;left:719.50px;top:656.50px;white-space:nowrap;font-size:11.50px;line-height:15px;color:#f8fafc;letter-spacing:-0.5px;">0</div>
<div style="position:absolute;left:828px;top:651px;width:1px;height:25px;background:#334155;"></div>
<div id="mc3_7" class="t" style="position:absolute;left:832.50px;top:656.50px;white-space:nowrap;font-size:11.50px;line-height:15px;color:#f8fafc;letter-spacing:-0.5px;">23.76</div>
<div style="position:absolute;left:34px;top:675px;width:908px;height:26px;background:#0f172a;border-top:1px solid #334155;border-bottom:1px solid #334155;"></div>
<div id="mc4_0" class="t" style="position:absolute;left:38.50px;top:681.50px;white-space:nowrap;font-size:11.50px;line-height:15px;color:#f8fafc;letter-spacing:-0.5px;">2032410463</div>
<div style="position:absolute;left:147px;top:676px;width:1px;height:25px;background:#334155;"></div>
<div id="mc4_1" class="t" style="position:absolute;left:151.50px;top:681.50px;white-space:nowrap;font-size:11.50px;line-height:15px;color:#f8fafc;letter-spacing:-0.5px;">EURUSD</div>
<div style="position:absolute;left:261px;top:676px;width:1px;height:25px;background:#334155;"></div>
<div id="mc4_2" class="t" style="position:absolute;left:265.50px;top:681.50px;white-space:nowrap;font-size:11.50px;line-height:15px;color:#f8fafc;letter-spacing:-0.5px;">Sell</div>
<div style="position:absolute;left:374px;top:676px;width:1px;height:25px;background:#334155;"></div>
<div id="mc4_3" class="t" style="position:absolute;left:378.50px;top:681.50px;white-space:nowrap;font-size:11.50px;line-height:15px;color:#f8fafc;letter-spacing:-0.5px;">0.12</div>
<div style="position:absolute;left:488px;top:676px;width:1px;height:25px;background:#334155;"></div>
<div id="mc4_4" class="t" style="position:absolute;left:492.50px;top:681.50px;white-space:nowrap;font-size:11.50px;line-height:15px;color:#f8fafc;letter-spacing:-0.5px;">1.15269</div>
<div style="position:absolute;left:601px;top:676px;width:1px;height:25px;background:#334155;"></div>
<div id="mc4_5" class="t" style="position:absolute;left:605.50px;top:681.50px;white-space:nowrap;font-size:11.50px;line-height:15px;color:#f8fafc;letter-spacing:-0.5px;">0</div>
<div style="position:absolute;left:715px;top:676px;width:1px;height:25px;background:#334155;"></div>
<div id="mc4_6" class="t" style="position:absolute;left:719.50px;top:681.50px;white-space:nowrap;font-size:11.50px;line-height:15px;color:#f8fafc;letter-spacing:-0.5px;">0</div>
<div style="position:absolute;left:828px;top:676px;width:1px;height:25px;background:#334155;"></div>
<div id="mc4_7" class="t" style="position:absolute;left:832.50px;top:681.50px;white-space:nowrap;font-size:11.50px;line-height:15px;color:#f8fafc;letter-spacing:-0.5px;">23.88</div>
<div style="position:absolute;left:34px;top:700px;width:908px;height:26px;background:#1e293b;border-top:1px solid #334155;border-bottom:1px solid #334155;"></div>
<div id="mc5_0" class="t" style="position:absolute;left:38.50px;top:706.50px;white-space:nowrap;font-size:11.50px;line-height:15px;color:#f8fafc;letter-spacing:-0.5px;">2032416954</div>
<div style="position:absolute;left:147px;top:701px;width:1px;height:25px;background:#334155;"></div>
<div id="mc5_1" class="t" style="position:absolute;left:151.50px;top:706.50px;white-space:nowrap;font-size:11.50px;line-height:15px;color:#f8fafc;letter-spacing:-0.5px;">EURUSD</div>
<div style="position:absolute;left:261px;top:701px;width:1px;height:25px;background:#334155;"></div>
<div id="mc5_2" class="t" style="position:absolute;left:265.50px;top:706.50px;white-space:nowrap;font-size:11.50px;line-height:15px;color:#f8fafc;letter-spacing:-0.5px;">Sell</div>
<div style="position:absolute;left:374px;top:701px;width:1px;height:25px;background:#334155;"></div>
<div id="mc5_3" class="t" style="position:absolute;left:378.50px;top:706.50px;white-space:nowrap;font-size:11.50px;line-height:15px;color:#f8fafc;letter-spacing:-0.5px;">0.12</div>
<div style="position:absolute;left:488px;top:701px;width:1px;height:25px;background:#334155;"></div>
<div id="mc5_4" class="t" style="position:absolute;left:492.50px;top:706.50px;white-space:nowrap;font-size:11.50px;line-height:15px;color:#f8fafc;letter-spacing:-0.5px;">1.15042</div>
<div style="position:absolute;left:601px;top:701px;width:1px;height:25px;background:#334155;"></div>
<div id="mc5_5" class="t" style="position:absolute;left:605.50px;top:706.50px;white-space:nowrap;font-size:11.50px;line-height:15px;color:#f8fafc;letter-spacing:-0.5px;">0</div>
<div style="position:absolute;left:715px;top:701px;width:1px;height:25px;background:#334155;"></div>
<div id="mc5_6" class="t" style="position:absolute;left:719.50px;top:706.50px;white-space:nowrap;font-size:11.50px;line-height:15px;color:#f8fafc;letter-spacing:-0.5px;">0</div>
<div style="position:absolute;left:828px;top:701px;width:1px;height:25px;background:#334155;"></div>
<div id="mc5_7" class="t" style="position:absolute;left:832.50px;top:706.50px;white-space:nowrap;font-size:11.50px;line-height:15px;color:#f8fafc;letter-spacing:-0.5px;">-3.36</div>
<div style="position:absolute;left:34px;top:725px;width:908px;height:26px;background:#0f172a;border-top:1px solid #334155;border-bottom:1px solid #334155;"></div>
<div id="mc6_0" class="t" style="position:absolute;left:38.50px;top:731.50px;white-space:nowrap;font-size:11.50px;line-height:15px;color:#f8fafc;letter-spacing:-0.5px;">2032416961</div>
<div style="position:absolute;left:147px;top:726px;width:1px;height:25px;background:#334155;"></div>
<div id="mc6_1" class="t" style="position:absolute;left:151.50px;top:731.50px;white-space:nowrap;font-size:11.50px;line-height:15px;color:#f8fafc;letter-spacing:-0.5px;">EURUSD</div>
<div style="position:absolute;left:261px;top:726px;width:1px;height:25px;background:#334155;"></div>
<div id="mc6_2" class="t" style="position:absolute;left:265.50px;top:731.50px;white-space:nowrap;font-size:11.50px;line-height:15px;color:#f8fafc;letter-spacing:-0.5px;">Sell</div>
<div style="position:absolute;left:374px;top:726px;width:1px;height:25px;background:#334155;"></div>
<div id="mc6_3" class="t" style="position:absolute;left:378.50px;top:731.50px;white-space:nowrap;font-size:11.50px;line-height:15px;color:#f8fafc;letter-spacing:-0.5px;">0.12</div>
<div style="position:absolute;left:488px;top:726px;width:1px;height:25px;background:#334155;"></div>
<div id="mc6_4" class="t" style="position:absolute;left:492.50px;top:731.50px;white-space:nowrap;font-size:11.50px;line-height:15px;color:#f8fafc;letter-spacing:-0.5px;">1.15046</div>
<div style="position:absolute;left:601px;top:726px;width:1px;height:25px;background:#334155;"></div>
<div id="mc6_5" class="t" style="position:absolute;left:605.50px;top:731.50px;white-space:nowrap;font-size:11.50px;line-height:15px;color:#f8fafc;letter-spacing:-0.5px;">0</div>
<div style="position:absolute;left:715px;top:726px;width:1px;height:25px;background:#334155;"></div>
<div id="mc6_6" class="t" style="position:absolute;left:719.50px;top:731.50px;white-space:nowrap;font-size:11.50px;line-height:15px;color:#f8fafc;letter-spacing:-0.5px;">0</div>
<div style="position:absolute;left:828px;top:726px;width:1px;height:25px;background:#334155;"></div>
<div id="mc6_7" class="t" style="position:absolute;left:832.50px;top:731.50px;white-space:nowrap;font-size:11.50px;line-height:15px;color:#f8fafc;letter-spacing:-0.5px;">-2.88</div>
<div style="position:absolute;left:34px;top:750px;width:908px;height:26px;background:#1e293b;border-top:1px solid #334155;border-bottom:1px solid #334155;"></div>
<div id="mc7_0" class="t" style="position:absolute;left:38.50px;top:756.50px;white-space:nowrap;font-size:11.50px;line-height:15px;color:#f8fafc;letter-spacing:-0.5px;">2032417039</div>
<div style="position:absolute;left:147px;top:751px;width:1px;height:25px;background:#334155;"></div>
<div id="mc7_1" class="t" style="position:absolute;left:151.50px;top:756.50px;white-space:nowrap;font-size:11.50px;line-height:15px;color:#f8fafc;letter-spacing:-0.5px;">EURUSD</div>
<div style="position:absolute;left:261px;top:751px;width:1px;height:25px;background:#334155;"></div>
<div id="mc7_2" class="t" style="position:absolute;left:265.50px;top:756.50px;white-space:nowrap;font-size:11.50px;line-height:15px;color:#f8fafc;letter-spacing:-0.5px;">Sell</div>
<div style="position:absolute;left:374px;top:751px;width:1px;height:25px;background:#334155;"></div>
<div id="mc7_3" class="t" style="position:absolute;left:378.50px;top:756.50px;white-space:nowrap;font-size:11.50px;line-height:15px;color:#f8fafc;letter-spacing:-0.5px;">0.12</div>
<div style="position:absolute;left:488px;top:751px;width:1px;height:25px;background:#334155;"></div>
<div id="mc7_4" class="t" style="position:absolute;left:492.50px;top:756.50px;white-space:nowrap;font-size:11.50px;line-height:15px;color:#f8fafc;letter-spacing:-0.5px;">1.15056</div>
<div style="position:absolute;left:601px;top:751px;width:1px;height:25px;background:#334155;"></div>
<div id="mc7_5" class="t" style="position:absolute;left:605.50px;top:756.50px;white-space:nowrap;font-size:11.50px;line-height:15px;color:#f8fafc;letter-spacing:-0.5px;">0</div>
<div style="position:absolute;left:715px;top:751px;width:1px;height:25px;background:#334155;"></div>
<div id="mc7_6" class="t" style="position:absolute;left:719.50px;top:756.50px;white-space:nowrap;font-size:11.50px;line-height:15px;color:#f8fafc;letter-spacing:-0.5px;">0</div>
<div style="position:absolute;left:828px;top:751px;width:1px;height:25px;background:#334155;"></div>
<div id="mc7_7" class="t" style="position:absolute;left:832.50px;top:756.50px;white-space:nowrap;font-size:11.50px;line-height:15px;color:#f8fafc;letter-spacing:-0.5px;">-1.68</div>
<div style="position:absolute;left:34px;top:775px;width:908px;height:26px;background:#0f172a;border-top:1px solid #334155;border-bottom:1px solid #334155;"></div>
<div id="mc8_0" class="t" style="position:absolute;left:38.50px;top:781.50px;white-space:nowrap;font-size:11.50px;line-height:15px;color:#f8fafc;letter-spacing:-0.5px;">2032417127</div>
<div style="position:absolute;left:147px;top:776px;width:1px;height:25px;background:#334155;"></div>
<div id="mc8_1" class="t" style="position:absolute;left:151.50px;top:781.50px;white-space:nowrap;font-size:11.50px;line-height:15px;color:#f8fafc;letter-spacing:-0.5px;">EURUSD</div>
<div style="position:absolute;left:261px;top:776px;width:1px;height:25px;background:#334155;"></div>
<div id="mc8_2" class="t" style="position:absolute;left:265.50px;top:781.50px;white-space:nowrap;font-size:11.50px;line-height:15px;color:#f8fafc;letter-spacing:-0.5px;">Buy</div>
<div style="position:absolute;left:374px;top:776px;width:1px;height:25px;background:#334155;"></div>
<div id="mc8_3" class="t" style="position:absolute;left:378.50px;top:781.50px;white-space:nowrap;font-size:11.50px;line-height:15px;color:#f8fafc;letter-spacing:-0.5px;">0.12</div>
<div style="position:absolute;left:488px;top:776px;width:1px;height:25px;background:#334155;"></div>
<div id="mc8_4" class="t" style="position:absolute;left:492.50px;top:781.50px;white-space:nowrap;font-size:11.50px;line-height:15px;color:#f8fafc;letter-spacing:-0.5px;">1.15071</div>
<div style="position:absolute;left:601px;top:776px;width:1px;height:25px;background:#334155;"></div>
<div id="mc8_5" class="t" style="position:absolute;left:605.50px;top:781.50px;white-space:nowrap;font-size:11.50px;line-height:15px;color:#f8fafc;letter-spacing:-0.5px;">0</div>
<div style="position:absolute;left:715px;top:776px;width:1px;height:25px;background:#334155;"></div>
<div id="mc8_6" class="t" style="position:absolute;left:719.50px;top:781.50px;white-space:nowrap;font-size:11.50px;line-height:15px;color:#f8fafc;letter-spacing:-0.5px;">0</div>
<div style="position:absolute;left:828px;top:776px;width:1px;height:25px;background:#334155;"></div>
<div id="mc8_7" class="t" style="position:absolute;left:832.50px;top:781.50px;white-space:nowrap;font-size:11.50px;line-height:15px;color:#f8fafc;letter-spacing:-0.5px;">-0.36</div>
<div style="position:absolute;left:34px;top:800px;width:908px;height:26px;background:#1e293b;border-top:1px solid #334155;border-bottom:1px solid #334155;"></div>
<div id="mc9_0" class="t" style="position:absolute;left:38.50px;top:806.50px;white-space:nowrap;font-size:11.50px;line-height:15px;color:#f8fafc;letter-spacing:-0.5px;">2032417137</div>
<div style="position:absolute;left:147px;top:801px;width:1px;height:25px;background:#334155;"></div>
<div id="mc9_1" class="t" style="position:absolute;left:151.50px;top:806.50px;white-space:nowrap;font-size:11.50px;line-height:15px;color:#f8fafc;letter-spacing:-0.5px;">EURUSD</div>
<div style="position:absolute;left:261px;top:801px;width:1px;height:25px;background:#334155;"></div>
<div id="mc9_2" class="t" style="position:absolute;left:265.50px;top:806.50px;white-space:nowrap;font-size:11.50px;line-height:15px;color:#f8fafc;letter-spacing:-0.5px;">Buy</div>
<div style="position:absolute;left:374px;top:801px;width:1px;height:25px;background:#334155;"></div>
<div id="mc9_3" class="t" style="position:absolute;left:378.50px;top:806.50px;white-space:nowrap;font-size:11.50px;line-height:15px;color:#f8fafc;letter-spacing:-0.5px;">0.12</div>
<div style="position:absolute;left:488px;top:801px;width:1px;height:25px;background:#334155;"></div>
<div id="mc9_4" class="t" style="position:absolute;left:492.50px;top:806.50px;white-space:nowrap;font-size:11.50px;line-height:15px;color:#f8fafc;letter-spacing:-0.5px;">1.15062</div>
<div style="position:absolute;left:601px;top:801px;width:1px;height:25px;background:#334155;"></div>
<div id="mc9_5" class="t" style="position:absolute;left:605.50px;top:806.50px;white-space:nowrap;font-size:11.50px;line-height:15px;color:#f8fafc;letter-spacing:-0.5px;">0</div>
<div style="position:absolute;left:715px;top:801px;width:1px;height:25px;background:#334155;"></div>
<div id="mc9_6" class="t" style="position:absolute;left:719.50px;top:806.50px;white-space:nowrap;font-size:11.50px;line-height:15px;color:#f8fafc;letter-spacing:-0.5px;">0</div>
<div style="position:absolute;left:828px;top:801px;width:1px;height:25px;background:#334155;"></div>
<div id="mc9_7" class="t" style="position:absolute;left:832.50px;top:806.50px;white-space:nowrap;font-size:11.50px;line-height:15px;color:#f8fafc;letter-spacing:-0.5px;">0.72</div>
<div style="position:absolute;left:34px;top:825px;width:908px;height:26px;background:#0f172a;border-top:1px solid #334155;border-bottom:1px solid #334155;"></div>
<div id="mc10_0" class="t" style="position:absolute;left:38.50px;top:831.50px;white-space:nowrap;font-size:11.50px;line-height:15px;color:#f8fafc;letter-spacing:-0.5px;">2032417142</div>
<div style="position:absolute;left:147px;top:826px;width:1px;height:25px;background:#334155;"></div>
<div id="mc10_1" class="t" style="position:absolute;left:151.50px;top:831.50px;white-space:nowrap;font-size:11.50px;line-height:15px;color:#f8fafc;letter-spacing:-0.5px;">EURUSD</div>
<div style="position:absolute;left:261px;top:826px;width:1px;height:25px;background:#334155;"></div>
<div id="mc10_2" class="t" style="position:absolute;left:265.50px;top:831.50px;white-space:nowrap;font-size:11.50px;line-height:15px;color:#f8fafc;letter-spacing:-0.5px;">Buy</div>
<div style="position:absolute;left:374px;top:826px;width:1px;height:25px;background:#334155;"></div>
<div id="mc10_3" class="t" style="position:absolute;left:378.50px;top:831.50px;white-space:nowrap;font-size:11.50px;line-height:15px;color:#f8fafc;letter-spacing:-0.5px;">0.12</div>
<div style="position:absolute;left:488px;top:826px;width:1px;height:25px;background:#334155;"></div>
<div id="mc10_4" class="t" style="position:absolute;left:492.50px;top:831.50px;white-space:nowrap;font-size:11.50px;line-height:15px;color:#f8fafc;letter-spacing:-0.5px;">1.1506</div>
<div style="position:absolute;left:601px;top:826px;width:1px;height:25px;background:#334155;"></div>
<div id="mc10_5" class="t" style="position:absolute;left:605.50px;top:831.50px;white-space:nowrap;font-size:11.50px;line-height:15px;color:#f8fafc;letter-spacing:-0.5px;">0</div>
<div style="position:absolute;left:715px;top:826px;width:1px;height:25px;background:#334155;"></div>
<div id="mc10_6" class="t" style="position:absolute;left:719.50px;top:831.50px;white-space:nowrap;font-size:11.50px;line-height:15px;color:#f8fafc;letter-spacing:-0.5px;">0</div>
<div style="position:absolute;left:828px;top:826px;width:1px;height:25px;background:#334155;"></div>
<div id="mc10_7" class="t" style="position:absolute;left:832.50px;top:831.50px;white-space:nowrap;font-size:11.50px;line-height:15px;color:#f8fafc;letter-spacing:-0.5px;">0.96</div>
<div style="position:absolute;left:34px;top:850px;width:908px;height:26px;background:#1e293b;border-top:1px solid #334155;border-bottom:1px solid #334155;"></div>
<div id="mc11_0" class="t" style="position:absolute;left:38.50px;top:856.50px;white-space:nowrap;font-size:11.50px;line-height:15px;color:#f8fafc;letter-spacing:-0.5px;">2032417147</div>
<div style="position:absolute;left:147px;top:851px;width:1px;height:25px;background:#334155;"></div>
<div id="mc11_1" class="t" style="position:absolute;left:151.50px;top:856.50px;white-space:nowrap;font-size:11.50px;line-height:15px;color:#f8fafc;letter-spacing:-0.5px;">EURUSD</div>
<div style="position:absolute;left:261px;top:851px;width:1px;height:25px;background:#334155;"></div>
<div id="mc11_2" class="t" style="position:absolute;left:265.50px;top:856.50px;white-space:nowrap;font-size:11.50px;line-height:15px;color:#f8fafc;letter-spacing:-0.5px;">Buy</div>
<div style="position:absolute;left:374px;top:851px;width:1px;height:25px;background:#334155;"></div>
<div id="mc11_3" class="t" style="position:absolute;left:378.50px;top:856.50px;white-space:nowrap;font-size:11.50px;line-height:15px;color:#f8fafc;letter-spacing:-0.5px;">0.12</div>
<div style="position:absolute;left:488px;top:851px;width:1px;height:25px;background:#334155;"></div>
<div id="mc11_4" class="t" style="position:absolute;left:492.50px;top:856.50px;white-space:nowrap;font-size:11.50px;line-height:15px;color:#f8fafc;letter-spacing:-0.5px;">1.15062</div>
<div style="position:absolute;left:601px;top:851px;width:1px;height:25px;background:#334155;"></div>
<div id="mc11_5" class="t" style="position:absolute;left:605.50px;top:856.50px;white-space:nowrap;font-size:11.50px;line-height:15px;color:#f8fafc;letter-spacing:-0.5px;">0</div>
<div style="position:absolute;left:715px;top:851px;width:1px;height:25px;background:#334155;"></div>
<div id="mc11_6" class="t" style="position:absolute;left:719.50px;top:856.50px;white-space:nowrap;font-size:11.50px;line-height:15px;color:#f8fafc;letter-spacing:-0.5px;">0</div>
<div style="position:absolute;left:828px;top:851px;width:1px;height:25px;background:#334155;"></div>
<div id="mc11_7" class="t" style="position:absolute;left:832.50px;top:856.50px;white-space:nowrap;font-size:11.50px;line-height:15px;color:#f8fafc;letter-spacing:-0.5px;">0.72</div>
<div style="position:absolute;left:34px;top:875px;width:908px;height:26px;background:#0f172a;border-top:1px solid #334155;border-bottom:1px solid #334155;"></div>
<div style="position:absolute;left:147px;top:876px;width:1px;height:25px;background:#334155;"></div>
<div style="position:absolute;left:261px;top:876px;width:1px;height:25px;background:#334155;"></div>
<div style="position:absolute;left:374px;top:876px;width:1px;height:25px;background:#334155;"></div>
<div style="position:absolute;left:488px;top:876px;width:1px;height:25px;background:#334155;"></div>
<div style="position:absolute;left:601px;top:876px;width:1px;height:25px;background:#334155;"></div>
<div style="position:absolute;left:715px;top:876px;width:1px;height:25px;background:#334155;"></div>
<div style="position:absolute;left:828px;top:876px;width:1px;height:25px;background:#334155;"></div>
<div id="solab" class="t" style="position:absolute;left:956.80px;top:529.00px;white-space:nowrap;font-size:15.18px;line-height:20px;color:#fff;font-weight:bold;">跟单端订单</div>
<div style="position:absolute;left:953px;top:553px;width:910px;height:399px;background:#0f172a;border:1px solid #000;"></div>
<div style="position:absolute;left:954px;top:554px;width:908px;height:22px;background:#1e293b;border-top:1px solid #fff;border-left:2px solid #fff;border-bottom:1px solid #6b7280;"></div>
<div id="sh0" class="t" style="position:absolute;left:967.00px;top:556.50px;white-space:nowrap;font-size:13.68px;line-height:18px;color:#fff;font-weight:bold;">订单号</div>
<div style="position:absolute;left:1067px;top:556px;width:2px;height:19px;background:#fff;"></div>
<div id="sh1" class="t" style="position:absolute;left:1080.00px;top:556.50px;white-space:nowrap;font-size:13.68px;line-height:18px;color:#fff;font-weight:bold;">品种</div>
<div style="position:absolute;left:1181px;top:556px;width:2px;height:19px;background:#fff;"></div>
<div id="sh2" class="t" style="position:absolute;left:1194.00px;top:556.50px;white-space:nowrap;font-size:13.68px;line-height:18px;color:#fff;font-weight:bold;">类型</div>
<div style="position:absolute;left:1294px;top:556px;width:2px;height:19px;background:#fff;"></div>
<div id="sh3" class="t" style="position:absolute;left:1307.00px;top:556.50px;white-space:nowrap;font-size:13.68px;line-height:18px;color:#fff;font-weight:bold;">手数</div>
<div style="position:absolute;left:1408px;top:556px;width:2px;height:19px;background:#fff;"></div>
<div id="sh4" class="t" style="position:absolute;left:1421.00px;top:556.50px;white-space:nowrap;font-size:13.68px;line-height:18px;color:#fff;font-weight:bold;">开仓价</div>
<div style="position:absolute;left:1521px;top:556px;width:2px;height:19px;background:#fff;"></div>
<div id="sh5" class="t" style="position:absolute;left:1534.00px;top:556.50px;white-space:nowrap;font-size:13.68px;line-height:18px;color:#fff;font-weight:bold;">止损</div>
<div style="position:absolute;left:1635px;top:556px;width:2px;height:19px;background:#fff;"></div>
<div id="sh6" class="t" style="position:absolute;left:1648.00px;top:556.50px;white-space:nowrap;font-size:13.68px;line-height:18px;color:#fff;font-weight:bold;">止盈</div>
<div style="position:absolute;left:1748px;top:556px;width:2px;height:19px;background:#fff;"></div>
<div id="sh7" class="t" style="position:absolute;left:1761.00px;top:556.50px;white-space:nowrap;font-size:13.68px;line-height:18px;color:#fff;font-weight:bold;">盈亏</div>
<div style="position:absolute;left:954px;top:575px;width:908px;height:26px;background:#0f172a;border-top:1px solid #6b7280;border-bottom:1px solid #334155;"></div>
<div style="position:absolute;left:955px;top:576px;width:112px;height:24px;background:#3b82f6;"></div>
<div id="sc0_0" class="t" style="position:absolute;left:958.50px;top:581.50px;white-space:nowrap;font-size:11.50px;line-height:15px;color:#f8fafc;letter-spacing:-0.5px;">2353206680</div>
<div style="position:absolute;left:1067px;top:576px;width:1px;height:25px;background:#334155;"></div>
<div id="sc0_1" class="t" style="position:absolute;left:1071.50px;top:581.50px;white-space:nowrap;font-size:11.50px;line-height:15px;color:#f8fafc;letter-spacing:-0.5px;">EURUSD</div>
<div style="position:absolute;left:1181px;top:576px;width:1px;height:25px;background:#334155;"></div>
<div id="sc0_2" class="t" style="position:absolute;left:1185.50px;top:581.50px;white-space:nowrap;font-size:11.50px;line-height:15px;color:#f8fafc;letter-spacing:-0.5px;">Sell</div>
<div style="position:absolute;left:1294px;top:576px;width:1px;height:25px;background:#334155;"></div>
<div id="sc0_3" class="t" style="position:absolute;left:1298.50px;top:581.50px;white-space:nowrap;font-size:11.50px;line-height:15px;color:#f8fafc;letter-spacing:-0.5px;">0.1</div>
<div style="position:absolute;left:1408px;top:576px;width:1px;height:25px;background:#334155;"></div>
<div id="sc0_4" class="t" style="position:absolute;left:1412.50px;top:581.50px;white-space:nowrap;font-size:11.50px;line-height:15px;color:#f8fafc;letter-spacing:-0.5px;">1.15258</div>
<div style="position:absolute;left:1521px;top:576px;width:1px;height:25px;background:#334155;"></div>
<div id="sc0_5" class="t" style="position:absolute;left:1525.50px;top:581.50px;white-space:nowrap;font-size:11.50px;line-height:15px;color:#f8fafc;letter-spacing:-0.5px;">0</div>
<div style="position:absolute;left:1635px;top:576px;width:1px;height:25px;background:#334155;"></div>
<div id="sc0_6" class="t" style="position:absolute;left:1639.50px;top:581.50px;white-space:nowrap;font-size:11.50px;line-height:15px;color:#f8fafc;letter-spacing:-0.5px;">0</div>
<div style="position:absolute;left:1748px;top:576px;width:1px;height:25px;background:#334155;"></div>
<div id="sc0_7" class="t" style="position:absolute;left:1752.50px;top:581.50px;white-space:nowrap;font-size:11.50px;line-height:15px;color:#f8fafc;letter-spacing:-0.5px;">16.33788</div>
<div style="position:absolute;left:954px;top:600px;width:908px;height:26px;background:#1e293b;border-top:1px solid #334155;border-bottom:1px solid #334155;"></div>
<div id="sc1_0" class="t" style="position:absolute;left:958.50px;top:606.50px;white-space:nowrap;font-size:11.50px;line-height:15px;color:#f8fafc;letter-spacing:-0.5px;">2353206707</div>
<div style="position:absolute;left:1067px;top:601px;width:1px;height:25px;background:#334155;"></div>
<div id="sc1_1" class="t" style="position:absolute;left:1071.50px;top:606.50px;white-space:nowrap;font-size:11.50px;line-height:15px;color:#f8fafc;letter-spacing:-0.5px;">EURUSD</div>
<div style="position:absolute;left:1181px;top:601px;width:1px;height:25px;background:#334155;"></div>
<div id="sc1_2" class="t" style="position:absolute;left:1185.50px;top:606.50px;white-space:nowrap;font-size:11.50px;line-height:15px;color:#f8fafc;letter-spacing:-0.5px;">Sell</div>
<div style="position:absolute;left:1294px;top:601px;width:1px;height:25px;background:#334155;"></div>
<div id="sc1_3" class="t" style="position:absolute;left:1298.50px;top:606.50px;white-space:nowrap;font-size:11.50px;line-height:15px;color:#f8fafc;letter-spacing:-0.5px;">0.1</div>
<div style="position:absolute;left:1408px;top:601px;width:1px;height:25px;background:#334155;"></div>
<div id="sc1_4" class="t" style="position:absolute;left:1412.50px;top:606.50px;white-space:nowrap;font-size:11.50px;line-height:15px;color:#f8fafc;letter-spacing:-0.5px;">1.15273</div>
<div style="position:absolute;left:1521px;top:601px;width:1px;height:25px;background:#334155;"></div>
<div id="sc1_5" class="t" style="position:absolute;left:1525.50px;top:606.50px;white-space:nowrap;font-size:11.50px;line-height:15px;color:#f8fafc;letter-spacing:-0.5px;">0</div>
<div style="position:absolute;left:1635px;top:601px;width:1px;height:25px;background:#334155;"></div>
<div id="sc1_6" class="t" style="position:absolute;left:1639.50px;top:606.50px;white-space:nowrap;font-size:11.50px;line-height:15px;color:#f8fafc;letter-spacing:-0.5px;">0</div>
<div style="position:absolute;left:1748px;top:601px;width:1px;height:25px;background:#334155;"></div>
<div id="sc1_7" class="t" style="position:absolute;left:1752.50px;top:606.50px;white-space:nowrap;font-size:11.50px;line-height:15px;color:#f8fafc;letter-spacing:-0.5px;">17.64144</div>
<div style="position:absolute;left:954px;top:625px;width:908px;height:26px;background:#0f172a;border-top:1px solid #334155;border-bottom:1px solid #334155;"></div>
<div id="sc2_0" class="t" style="position:absolute;left:958.50px;top:631.50px;white-space:nowrap;font-size:11.50px;line-height:15px;color:#f8fafc;letter-spacing:-0.5px;">2353206802</div>
<div style="position:absolute;left:1067px;top:626px;width:1px;height:25px;background:#334155;"></div>
<div id="sc2_1" class="t" style="position:absolute;left:1071.50px;top:631.50px;white-space:nowrap;font-size:11.50px;line-height:15px;color:#f8fafc;letter-spacing:-0.5px;">EURUSD</div>
<div style="position:absolute;left:1181px;top:626px;width:1px;height:25px;background:#334155;"></div>
<div id="sc2_2" class="t" style="position:absolute;left:1185.50px;top:631.50px;white-space:nowrap;font-size:11.50px;line-height:15px;color:#f8fafc;letter-spacing:-0.5px;">Sell</div>
<div style="position:absolute;left:1294px;top:626px;width:1px;height:25px;background:#334155;"></div>
<div id="sc2_3" class="t" style="position:absolute;left:1298.50px;top:631.50px;white-space:nowrap;font-size:11.50px;line-height:15px;color:#f8fafc;letter-spacing:-0.5px;">0.1</div>
<div style="position:absolute;left:1408px;top:626px;width:1px;height:25px;background:#334155;"></div>
<div id="sc2_4" class="t" style="position:absolute;left:1412.50px;top:631.50px;white-space:nowrap;font-size:11.50px;line-height:15px;color:#f8fafc;letter-spacing:-0.5px;">1.15268</div>
<div style="position:absolute;left:1521px;top:626px;width:1px;height:25px;background:#334155;"></div>
<div id="sc2_5" class="t" style="position:absolute;left:1525.50px;top:631.50px;white-space:nowrap;font-size:11.50px;line-height:15px;color:#f8fafc;letter-spacing:-0.5px;">0</div>
<div style="position:absolute;left:1635px;top:626px;width:1px;height:25px;background:#334155;"></div>
<div id="sc2_6" class="t" style="position:absolute;left:1639.50px;top:631.50px;white-space:nowrap;font-size:11.50px;line-height:15px;color:#f8fafc;letter-spacing:-0.5px;">0</div>
<div style="position:absolute;left:1748px;top:626px;width:1px;height:25px;background:#334155;"></div>
<div id="sc2_7" class="t" style="position:absolute;left:1752.50px;top:631.50px;white-space:nowrap;font-size:11.50px;line-height:15px;color:#f8fafc;letter-spacing:-0.5px;">17.20692</div>
<div style="position:absolute;left:954px;top:650px;width:908px;height:26px;background:#1e293b;border-top:1px solid #334155;border-bottom:1px solid #334155;"></div>
<div id="sc3_0" class="t" style="position:absolute;left:958.50px;top:656.50px;white-space:nowrap;font-size:11.50px;line-height:15px;color:#f8fafc;letter-spacing:-0.5px;">2353206804</div>
<div style="position:absolute;left:1067px;top:651px;width:1px;height:25px;background:#334155;"></div>
<div id="sc3_1" class="t" style="position:absolute;left:1071.50px;top:656.50px;white-space:nowrap;font-size:11.50px;line-height:15px;color:#f8fafc;letter-spacing:-0.5px;">EURUSD</div>
<div style="position:absolute;left:1181px;top:651px;width:1px;height:25px;background:#334155;"></div>
<div id="sc3_2" class="t" style="position:absolute;left:1185.50px;top:656.50px;white-space:nowrap;font-size:11.50px;line-height:15px;color:#f8fafc;letter-spacing:-0.5px;">Sell</div>
<div style="position:absolute;left:1294px;top:651px;width:1px;height:25px;background:#334155;"></div>
<div id="sc3_3" class="t" style="position:absolute;left:1298.50px;top:656.50px;white-space:nowrap;font-size:11.50px;line-height:15px;color:#f8fafc;letter-spacing:-0.5px;">0.1</div>
<div style="position:absolute;left:1408px;top:651px;width:1px;height:25px;background:#334155;"></div>
<div id="sc3_4" class="t" style="position:absolute;left:1412.50px;top:656.50px;white-space:nowrap;font-size:11.50px;line-height:15px;color:#f8fafc;letter-spacing:-0.5px;">1.15268</div>
<div style="position:absolute;left:1521px;top:651px;width:1px;height:25px;background:#334155;"></div>
<div id="sc3_5" class="t" style="position:absolute;left:1525.50px;top:656.50px;white-space:nowrap;font-size:11.50px;line-height:15px;color:#f8fafc;letter-spacing:-0.5px;">0</div>
<div style="position:absolute;left:1635px;top:651px;width:1px;height:25px;background:#334155;"></div>
<div id="sc3_6" class="t" style="position:absolute;left:1639.50px;top:656.50px;white-space:nowrap;font-size:11.50px;line-height:15px;color:#f8fafc;letter-spacing:-0.5px;">0</div>
<div style="position:absolute;left:1748px;top:651px;width:1px;height:25px;background:#334155;"></div>
<div id="sc3_7" class="t" style="position:absolute;left:1752.50px;top:656.50px;white-space:nowrap;font-size:11.50px;line-height:15px;color:#f8fafc;letter-spacing:-0.5px;">17.20692</div>
<div style="position:absolute;left:954px;top:675px;width:908px;height:26px;background:#0f172a;border-top:1px solid #334155;border-bottom:1px solid #334155;"></div>
<div id="sc4_0" class="t" style="position:absolute;left:958.50px;top:681.50px;white-space:nowrap;font-size:11.50px;line-height:15px;color:#f8fafc;letter-spacing:-0.5px;">2353206843</div>
<div style="position:absolute;left:1067px;top:676px;width:1px;height:25px;background:#334155;"></div>
<div id="sc4_1" class="t" style="position:absolute;left:1071.50px;top:681.50px;white-space:nowrap;font-size:11.50px;line-height:15px;color:#f8fafc;letter-spacing:-0.5px;">EURUSD</div>
<div style="position:absolute;left:1181px;top:676px;width:1px;height:25px;background:#334155;"></div>
<div id="sc4_2" class="t" style="position:absolute;left:1185.50px;top:681.50px;white-space:nowrap;font-size:11.50px;line-height:15px;color:#f8fafc;letter-spacing:-0.5px;">Sell</div>
<div style="position:absolute;left:1294px;top:676px;width:1px;height:25px;background:#334155;"></div>
<div id="sc4_3" class="t" style="position:absolute;left:1298.50px;top:681.50px;white-space:nowrap;font-size:11.50px;line-height:15px;color:#f8fafc;letter-spacing:-0.5px;">0.1</div>
<div style="position:absolute;left:1408px;top:676px;width:1px;height:25px;background:#334155;"></div>
<div id="sc4_4" class="t" style="position:absolute;left:1412.50px;top:681.50px;white-space:nowrap;font-size:11.50px;line-height:15px;color:#f8fafc;letter-spacing:-0.5px;">1.15269</div>
<div style="position:absolute;left:1521px;top:676px;width:1px;height:25px;background:#334155;"></div>
<div id="sc4_5" class="t" style="position:absolute;left:1525.50px;top:681.50px;white-space:nowrap;font-size:11.50px;line-height:15px;color:#f8fafc;letter-spacing:-0.5px;">0</div>
<div style="position:absolute;left:1635px;top:676px;width:1px;height:25px;background:#334155;"></div>
<div id="sc4_6" class="t" style="position:absolute;left:1639.50px;top:681.50px;white-space:nowrap;font-size:11.50px;line-height:15px;color:#f8fafc;letter-spacing:-0.5px;">0</div>
<div style="position:absolute;left:1748px;top:676px;width:1px;height:25px;background:#334155;"></div>
<div id="sc4_7" class="t" style="position:absolute;left:1752.50px;top:681.50px;white-space:nowrap;font-size:11.50px;line-height:15px;color:#f8fafc;letter-spacing:-0.5px;">17.29382</div>
<div style="position:absolute;left:954px;top:700px;width:908px;height:26px;background:#1e293b;border-top:1px solid #334155;border-bottom:1px solid #334155;"></div>
<div id="sc5_0" class="t" style="position:absolute;left:958.50px;top:706.50px;white-space:nowrap;font-size:11.50px;line-height:15px;color:#f8fafc;letter-spacing:-0.5px;">2353213992</div>
<div style="position:absolute;left:1067px;top:701px;width:1px;height:25px;background:#334155;"></div>
<div id="sc5_1" class="t" style="position:absolute;left:1071.50px;top:706.50px;white-space:nowrap;font-size:11.50px;line-height:15px;color:#f8fafc;letter-spacing:-0.5px;">EURUSD</div>
<div style="position:absolute;left:1181px;top:701px;width:1px;height:25px;background:#334155;"></div>
<div id="sc5_2" class="t" style="position:absolute;left:1185.50px;top:706.50px;white-space:nowrap;font-size:11.50px;line-height:15px;color:#f8fafc;letter-spacing:-0.5px;">Sell</div>
<div style="position:absolute;left:1294px;top:701px;width:1px;height:25px;background:#334155;"></div>
<div id="sc5_3" class="t" style="position:absolute;left:1298.50px;top:706.50px;white-space:nowrap;font-size:11.50px;line-height:15px;color:#f8fafc;letter-spacing:-0.5px;">0.1</div>
<div style="position:absolute;left:1408px;top:701px;width:1px;height:25px;background:#334155;"></div>
<div id="sc5_4" class="t" style="position:absolute;left:1412.50px;top:706.50px;white-space:nowrap;font-size:11.50px;line-height:15px;color:#f8fafc;letter-spacing:-0.5px;">1.15041</div>
<div style="position:absolute;left:1521px;top:701px;width:1px;height:25px;background:#334155;"></div>
<div id="sc5_5" class="t" style="position:absolute;left:1525.50px;top:706.50px;white-space:nowrap;font-size:11.50px;line-height:15px;color:#f8fafc;letter-spacing:-0.5px;">0</div>
<div style="position:absolute;left:1635px;top:701px;width:1px;height:25px;background:#334155;"></div>
<div id="sc5_6" class="t" style="position:absolute;left:1639.50px;top:706.50px;white-space:nowrap;font-size:11.50px;line-height:15px;color:#f8fafc;letter-spacing:-0.5px;">0</div>
<div style="position:absolute;left:1748px;top:701px;width:1px;height:25px;background:#334155;"></div>
<div id="sc5_7" class="t" style="position:absolute;left:1752.50px;top:706.50px;white-space:nowrap;font-size:11.50px;line-height:15px;color:#f8fafc;letter-spacing:-0.5px;">-2.52021</div>
<div style="position:absolute;left:954px;top:725px;width:908px;height:26px;background:#0f172a;border-top:1px solid #334155;border-bottom:1px solid #334155;"></div>
<div id="sc6_0" class="t" style="position:absolute;left:958.50px;top:731.50px;white-space:nowrap;font-size:11.50px;line-height:15px;color:#f8fafc;letter-spacing:-0.5px;">2353214000</div>
<div style="position:absolute;left:1067px;top:726px;width:1px;height:25px;background:#334155;"></div>
<div id="sc6_1" class="t" style="position:absolute;left:1071.50px;top:731.50px;white-space:nowrap;font-size:11.50px;line-height:15px;color:#f8fafc;letter-spacing:-0.5px;">EURUSD</div>
<div style="position:absolute;left:1181px;top:726px;width:1px;height:25px;background:#334155;"></div>
<div id="sc6_2" class="t" style="position:absolute;left:1185.50px;top:731.50px;white-space:nowrap;font-size:11.50px;line-height:15px;color:#f8fafc;letter-spacing:-0.5px;">Sell</div>
<div style="position:absolute;left:1294px;top:726px;width:1px;height:25px;background:#334155;"></div>
<div id="sc6_3" class="t" style="position:absolute;left:1298.50px;top:731.50px;white-space:nowrap;font-size:11.50px;line-height:15px;color:#f8fafc;letter-spacing:-0.5px;">0.1</div>
<div style="position:absolute;left:1408px;top:726px;width:1px;height:25px;background:#334155;"></div>
<div id="sc6_4" class="t" style="position:absolute;left:1412.50px;top:731.50px;white-space:nowrap;font-size:11.50px;line-height:15px;color:#f8fafc;letter-spacing:-0.5px;">1.15034</div>
<div style="position:absolute;left:1521px;top:726px;width:1px;height:25px;background:#334155;"></div>
<div id="sc6_5" class="t" style="position:absolute;left:1525.50px;top:731.50px;white-space:nowrap;font-size:11.50px;line-height:15px;color:#f8fafc;letter-spacing:-0.5px;">0</div>
<div style="position:absolute;left:1635px;top:726px;width:1px;height:25px;background:#334155;"></div>
<div id="sc6_6" class="t" style="position:absolute;left:1639.50px;top:731.50px;white-space:nowrap;font-size:11.50px;line-height:15px;color:#f8fafc;letter-spacing:-0.5px;">0</div>
<div style="position:absolute;left:1748px;top:726px;width:1px;height:25px;background:#334155;"></div>
<div id="sc6_7" class="t" style="position:absolute;left:1752.50px;top:731.50px;white-space:nowrap;font-size:11.50px;line-height:15px;color:#f8fafc;letter-spacing:-0.5px;">-3.12853</div>
<div style="position:absolute;left:954px;top:750px;width:908px;height:26px;background:#1e293b;border-top:1px solid #334155;border-bottom:1px solid #334155;"></div>
<div id="sc7_0" class="t" style="position:absolute;left:958.50px;top:756.50px;white-space:nowrap;font-size:11.50px;line-height:15px;color:#f8fafc;letter-spacing:-0.5px;">2353214070</div>
<div style="position:absolute;left:1067px;top:751px;width:1px;height:25px;background:#334155;"></div>
<div id="sc7_1" class="t" style="position:absolute;left:1071.50px;top:756.50px;white-space:nowrap;font-size:11.50px;line-height:15px;color:#f8fafc;letter-spacing:-0.5px;">EURUSD</div>
<div style="position:absolute;left:1181px;top:751px;width:1px;height:25px;background:#334155;"></div>
<div id="sc7_2" class="t" style="position:absolute;left:1185.50px;top:756.50px;white-space:nowrap;font-size:11.50px;line-height:15px;color:#f8fafc;letter-spacing:-0.5px;">Sell</div>
<div style="position:absolute;left:1294px;top:751px;width:1px;height:25px;background:#334155;"></div>
<div id="sc7_3" class="t" style="position:absolute;left:1298.50px;top:756.50px;white-space:nowrap;font-size:11.50px;line-height:15px;color:#f8fafc;letter-spacing:-0.5px;">0.1</div>
<div style="position:absolute;left:1408px;top:751px;width:1px;height:25px;background:#334155;"></div>
<div id="sc7_4" class="t" style="position:absolute;left:1412.50px;top:756.50px;white-space:nowrap;font-size:11.50px;line-height:15px;color:#f8fafc;letter-spacing:-0.5px;">1.15056</div>
<div style="position:absolute;left:1521px;top:751px;width:1px;height:25px;background:#334155;"></div>
<div id="sc7_5" class="t" style="position:absolute;left:1525.50px;top:756.50px;white-space:nowrap;font-size:11.50px;line-height:15px;color:#f8fafc;letter-spacing:-0.5px;">0</div>
<div style="position:absolute;left:1635px;top:751px;width:1px;height:25px;background:#334155;"></div>
<div id="sc7_6" class="t" style="position:absolute;left:1639.50px;top:756.50px;white-space:nowrap;font-size:11.50px;line-height:15px;color:#f8fafc;letter-spacing:-0.5px;">0</div>
<div style="position:absolute;left:1748px;top:751px;width:1px;height:25px;background:#334155;"></div>
<div id="sc7_7" class="t" style="position:absolute;left:1752.50px;top:756.50px;white-space:nowrap;font-size:11.50px;line-height:15px;color:#f8fafc;letter-spacing:-0.5px;">-1.21665</div>
<div style="position:absolute;left:954px;top:775px;width:908px;height:26px;background:#0f172a;border-top:1px solid #334155;border-bottom:1px solid #334155;"></div>
<div id="sc8_0" class="t" style="position:absolute;left:958.50px;top:781.50px;white-space:nowrap;font-size:11.50px;line-height:15px;color:#f8fafc;letter-spacing:-0.5px;">2353214203</div>
<div style="position:absolute;left:1067px;top:776px;width:1px;height:25px;background:#334155;"></div>
<div id="sc8_1" class="t" style="position:absolute;left:1071.50px;top:781.50px;white-space:nowrap;font-size:11.50px;line-height:15px;color:#f8fafc;letter-spacing:-0.5px;">EURUSD</div>
<div style="position:absolute;left:1181px;top:776px;width:1px;height:25px;background:#334155;"></div>
<div id="sc8_2" class="t" style="position:absolute;left:1185.50px;top:781.50px;white-space:nowrap;font-size:11.50px;line-height:15px;color:#f8fafc;letter-spacing:-0.5px;">Buy</div>
<div style="position:absolute;left:1294px;top:776px;width:1px;height:25px;background:#334155;"></div>
<div id="sc8_3" class="t" style="position:absolute;left:1298.50px;top:781.50px;white-space:nowrap;font-size:11.50px;line-height:15px;color:#f8fafc;letter-spacing:-0.5px;">0.1</div>
<div style="position:absolute;left:1408px;top:776px;width:1px;height:25px;background:#334155;"></div>
<div id="sc8_4" class="t" style="position:absolute;left:1412.50px;top:781.50px;white-space:nowrap;font-size:11.50px;line-height:15px;color:#f8fafc;letter-spacing:-0.5px;">1.15071</div>
<div style="position:absolute;left:1521px;top:776px;width:1px;height:25px;background:#334155;"></div>
<div id="sc8_5" class="t" style="position:absolute;left:1525.50px;top:781.50px;white-space:nowrap;font-size:11.50px;line-height:15px;color:#f8fafc;letter-spacing:-0.5px;">0</div>
<div style="position:absolute;left:1635px;top:776px;width:1px;height:25px;background:#334155;"></div>
<div id="sc8_6" class="t" style="position:absolute;left:1639.50px;top:781.50px;white-space:nowrap;font-size:11.50px;line-height:15px;color:#f8fafc;letter-spacing:-0.5px;">0</div>
<div style="position:absolute;left:1748px;top:776px;width:1px;height:25px;background:#334155;"></div>
<div id="sc8_7" class="t" style="position:absolute;left:1752.50px;top:781.50px;white-space:nowrap;font-size:11.50px;line-height:15px;color:#f8fafc;letter-spacing:-0.5px;">-0.26072</div>
<div style="position:absolute;left:954px;top:800px;width:908px;height:26px;background:#1e293b;border-top:1px solid #334155;border-bottom:1px solid #334155;"></div>
<div id="sc9_0" class="t" style="position:absolute;left:958.50px;top:806.50px;white-space:nowrap;font-size:11.50px;line-height:15px;color:#f8fafc;letter-spacing:-0.5px;">2353214217</div>
<div style="position:absolute;left:1067px;top:801px;width:1px;height:25px;background:#334155;"></div>
<div id="sc9_1" class="t" style="position:absolute;left:1071.50px;top:806.50px;white-space:nowrap;font-size:11.50px;line-height:15px;color:#f8fafc;letter-spacing:-0.5px;">EURUSD</div>
<div style="position:absolute;left:1181px;top:801px;width:1px;height:25px;background:#334155;"></div>
<div id="sc9_2" class="t" style="position:absolute;left:1185.50px;top:806.50px;white-space:nowrap;font-size:11.50px;line-height:15px;color:#f8fafc;letter-spacing:-0.5px;">Buy</div>
<div style="position:absolute;left:1294px;top:801px;width:1px;height:25px;background:#334155;"></div>
<div id="sc9_3" class="t" style="position:absolute;left:1298.50px;top:806.50px;white-space:nowrap;font-size:11.50px;line-height:15px;color:#f8fafc;letter-spacing:-0.5px;">0.1</div>
<div style="position:absolute;left:1408px;top:801px;width:1px;height:25px;background:#334155;"></div>
<div id="sc9_4" class="t" style="position:absolute;left:1412.50px;top:806.50px;white-space:nowrap;font-size:11.50px;line-height:15px;color:#f8fafc;letter-spacing:-0.5px;">1.15074</div>
<div style="position:absolute;left:1521px;top:801px;width:1px;height:25px;background:#334155;"></div>
<div id="sc9_5" class="t" style="position:absolute;left:1525.50px;top:806.50px;white-space:nowrap;font-size:11.50px;line-height:15px;color:#f8fafc;letter-spacing:-0.5px;">0</div>
<div style="position:absolute;left:1635px;top:801px;width:1px;height:25px;background:#334155;"></div>
<div id="sc9_6" class="t" style="position:absolute;left:1639.50px;top:806.50px;white-space:nowrap;font-size:11.50px;line-height:15px;color:#f8fafc;letter-spacing:-0.5px;">0</div>
<div style="position:absolute;left:1748px;top:801px;width:1px;height:25px;background:#334155;"></div>
<div id="sc9_7" class="t" style="position:absolute;left:1752.50px;top:806.50px;white-space:nowrap;font-size:11.50px;line-height:15px;color:#f8fafc;letter-spacing:-0.5px;">-0.52143</div>
<div style="position:absolute;left:954px;top:825px;width:908px;height:26px;background:#0f172a;border-top:1px solid #334155;border-bottom:1px solid #334155;"></div>
<div id="sc10_0" class="t" style="position:absolute;left:958.50px;top:831.50px;white-space:nowrap;font-size:11.50px;line-height:15px;color:#f8fafc;letter-spacing:-0.5px;">2353214220</div>
<div style="position:absolute;left:1067px;top:826px;width:1px;height:25px;background:#334155;"></div>
<div id="sc10_1" class="t" style="position:absolute;left:1071.50px;top:831.50px;white-space:nowrap;font-size:11.50px;line-height:15px;color:#f8fafc;letter-spacing:-0.5px;">EURUSD</div>
<div style="position:absolute;left:1181px;top:826px;width:1px;height:25px;background:#334155;"></div>
<div id="sc10_2" class="t" style="position:absolute;left:1185.50px;top:831.50px;white-space:nowrap;font-size:11.50px;line-height:15px;color:#f8fafc;letter-spacing:-0.5px;">Buy</div>
<div style="position:absolute;left:1294px;top:826px;width:1px;height:25px;background:#334155;"></div>
<div id="sc10_3" class="t" style="position:absolute;left:1298.50px;top:831.50px;white-space:nowrap;font-size:11.50px;line-height:15px;color:#f8fafc;letter-spacing:-0.5px;">0.1</div>
<div style="position:absolute;left:1408px;top:826px;width:1px;height:25px;background:#334155;"></div>
<div id="sc10_4" class="t" style="position:absolute;left:1412.50px;top:831.50px;white-space:nowrap;font-size:11.50px;line-height:15px;color:#f8fafc;letter-spacing:-0.5px;">1.15062</div>
<div style="position:absolute;left:1521px;top:826px;width:1px;height:25px;background:#334155;"></div>
<div id="sc10_5" class="t" style="position:absolute;left:1525.50px;top:831.50px;white-space:nowrap;font-size:11.50px;line-height:15px;color:#f8fafc;letter-spacing:-0.5px;">0</div>
<div style="position:absolute;left:1635px;top:826px;width:1px;height:25px;background:#334155;"></div>
<div id="sc10_6" class="t" style="position:absolute;left:1639.50px;top:831.50px;white-space:nowrap;font-size:11.50px;line-height:15px;color:#f8fafc;letter-spacing:-0.5px;">0</div>
<div style="position:absolute;left:1748px;top:826px;width:1px;height:25px;background:#334155;"></div>
<div id="sc10_7" class="t" style="position:absolute;left:1752.50px;top:831.50px;white-space:nowrap;font-size:11.50px;line-height:15px;color:#f8fafc;letter-spacing:-0.5px;">0.52143</div>
<div style="position:absolute;left:954px;top:850px;width:908px;height:26px;background:#1e293b;border-top:1px solid #334155;border-bottom:1px solid #334155;"></div>
<div id="sc11_0" class="t" style="position:absolute;left:958.50px;top:856.50px;white-space:nowrap;font-size:11.50px;line-height:15px;color:#f8fafc;letter-spacing:-0.5px;">2353214226</div>
<div style="position:absolute;left:1067px;top:851px;width:1px;height:25px;background:#334155;"></div>
<div id="sc11_1" class="t" style="position:absolute;left:1071.50px;top:856.50px;white-space:nowrap;font-size:11.50px;line-height:15px;color:#f8fafc;letter-spacing:-0.5px;">EURUSD</div>
<div style="position:absolute;left:1181px;top:851px;width:1px;height:25px;background:#334155;"></div>
<div id="sc11_2" class="t" style="position:absolute;left:1185.50px;top:856.50px;white-space:nowrap;font-size:11.50px;line-height:15px;color:#f8fafc;letter-spacing:-0.5px;">Buy</div>
<div style="position:absolute;left:1294px;top:851px;width:1px;height:25px;background:#334155;"></div>
<div id="sc11_3" class="t" style="position:absolute;left:1298.50px;top:856.50px;white-space:nowrap;font-size:11.50px;line-height:15px;color:#f8fafc;letter-spacing:-0.5px;">0.1</div>
<div style="position:absolute;left:1408px;top:851px;width:1px;height:25px;background:#334155;"></div>
<div id="sc11_4" class="t" style="position:absolute;left:1412.50px;top:856.50px;white-space:nowrap;font-size:11.50px;line-height:15px;color:#f8fafc;letter-spacing:-0.5px;">1.15075</div>
<div style="position:absolute;left:1521px;top:851px;width:1px;height:25px;background:#334155;"></div>
<div id="sc11_5" class="t" style="position:absolute;left:1525.50px;top:856.50px;white-space:nowrap;font-size:11.50px;line-height:15px;color:#f8fafc;letter-spacing:-0.5px;">0</div>
<div style="position:absolute;left:1635px;top:851px;width:1px;height:25px;background:#334155;"></div>
<div id="sc11_6" class="t" style="position:absolute;left:1639.50px;top:856.50px;white-space:nowrap;font-size:11.50px;line-height:15px;color:#f8fafc;letter-spacing:-0.5px;">0</div>
<div style="position:absolute;left:1748px;top:851px;width:1px;height:25px;background:#334155;"></div>
<div id="sc11_7" class="t" style="position:absolute;left:1752.50px;top:856.50px;white-space:nowrap;font-size:11.50px;line-height:15px;color:#f8fafc;letter-spacing:-0.5px;">-0.60834</div>
<div style="position:absolute;left:954px;top:875px;width:908px;height:26px;background:#0f172a;border-top:1px solid #334155;border-bottom:1px solid #334155;"></div>
<div style="position:absolute;left:1067px;top:876px;width:1px;height:25px;background:#334155;"></div>
<div style="position:absolute;left:1181px;top:876px;width:1px;height:25px;background:#334155;"></div>
<div style="position:absolute;left:1294px;top:876px;width:1px;height:25px;background:#334155;"></div>
<div style="position:absolute;left:1408px;top:876px;width:1px;height:25px;background:#334155;"></div>
<div style="position:absolute;left:1521px;top:876px;width:1px;height:25px;background:#334155;"></div>
<div style="position:absolute;left:1635px;top:876px;width:1px;height:25px;background:#334155;"></div>
<div style="position:absolute;left:1748px;top:876px;width:1px;height:25px;background:#334155;"></div>
</body></html>
